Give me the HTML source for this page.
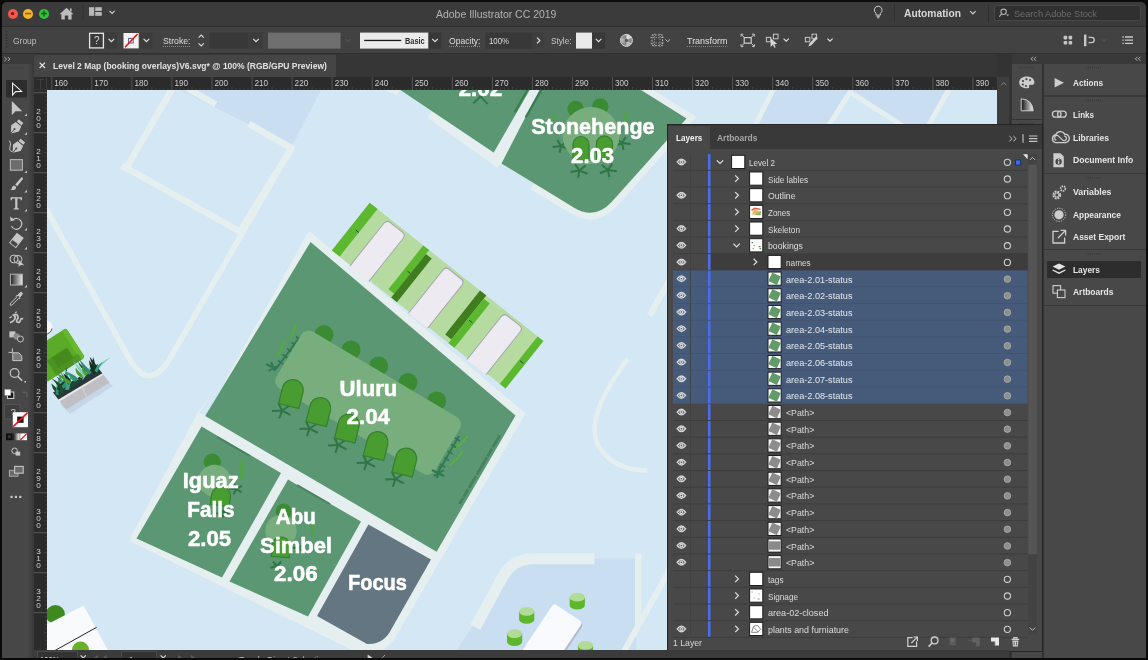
<!DOCTYPE html>
<html><head><meta charset="utf-8"><title>Adobe Illustrator CC 2019</title>
<style>
*{box-sizing:border-box;margin:0;padding:0}
html,body{width:1148px;height:660px;overflow:hidden;background:#101010;font-family:"Liberation Sans",sans-serif;}
#app{will-change:transform;position:absolute;left:0;top:0;width:1148px;height:660px;background:#0c0c0c;overflow:hidden}
.abs{position:absolute}
.t{position:absolute;white-space:nowrap;color:#cfcfcf;font-size:9.5px;line-height:12px}
.b{font-weight:bold}
svg{position:absolute;overflow:visible}
</style></head><body><div id="app">
<div class="abs" style="left:2px;top:2px;width:1144px;height:24px;background:#3b3b3b;border-radius:5px 5px 0 0"></div><div class="abs" style="left:2px;top:26px;width:1144px;height:1px;background:#2c2c2c"></div><div class="abs" style="left:7.5px;top:8.5px;width:10px;height:10px;border-radius:50%;background:#f2564d"></div><div class="abs" style="left:23.2px;top:8.5px;width:10px;height:10px;border-radius:50%;background:#f6b42c"></div><div class="abs" style="left:39px;top:8.5px;width:10px;height:10px;border-radius:50%;background:#35c03f"></div><svg style="left:0;top:0" width="1148" height="30">
<circle cx="12.5" cy="13.5" r="1.6" fill="#7c1109"/>
<rect x="25.2" y="12.8" width="6" height="1.5" fill="#90590a"/>
<path d="M41 13.5h6M44 10.5v6" stroke="#0b650f" stroke-width="1.5"/>
<path d="M59.5 14.2 L66.5 7.8 L73.5 14.2 L71.6 14.2 L71.6 19.6 L68.2 19.6 L68.2 15.6 L64.8 15.6 L64.8 19.6 L61.4 19.6 L61.4 14.2 Z" fill="#bdbdbd"/>
<rect x="70" y="8.4" width="1.6" height="3" fill="#bdbdbd"/>
<rect x="82.5" y="5" width="1" height="16" fill="#333"/>
<rect x="89" y="7.2" width="5.2" height="8.6" fill="#b8b8b8"/><rect x="95.2" y="7.2" width="6.6" height="3.8" fill="#b8b8b8"/><rect x="95.2" y="12" width="6.6" height="3.8" fill="#b8b8b8"/>
<path d="M109.5 10.8 l2.6 2.6 l2.6 -2.6" fill="none" stroke="#d0d0d0" stroke-width="1.2"/>
</svg><svg style="left:0;top:0" width="1148" height="30">
<path d="M878.2 6.2 a3.9 3.9 0 0 1 2.2 7.1 v1.8 h-4.4 v-1.8 a3.9 3.9 0 0 1 2.2 -7.1z M876.6 16.3h3.2 M877 17.8h2.4" fill="none" stroke="#c8c8c8" stroke-width="1"/>
<rect x="894" y="4" width="1" height="18" fill="#303030"/>
<path d="M970.2 11.2 l2.7 2.7 l2.7 -2.7" fill="none" stroke="#d0d0d0" stroke-width="1.2"/>
<rect x="988" y="4" width="1" height="18" fill="#303030"/>
<rect x="994.5" y="5.5" width="146" height="15" rx="2" fill="#303030" stroke="#474747" stroke-width="1"/>
<circle cx="1003.6" cy="11.8" r="2.7" fill="none" stroke="#b0b0b0" stroke-width="1.1"/><path d="M1001.8 13.8 l-2.6 2.8" stroke="#b0b0b0" stroke-width="1.2"/>
<path d="M1006.2 14.6 h3 l-1.5 1.7z" fill="#b0b0b0"/>
</svg><div class="abs" style="left:2px;top:27px;width:1144px;height:27px;background:#424242"></div><div class="abs" style="left:2px;top:53px;width:1144px;height:1px;background:#303030"></div><svg style="left:0;top:0" width="1148" height="60">
<g fill="#2e2e2e"><rect x="6" y="31" width="1.2" height="1.5"/><rect x="6" y="34" width="1.2" height="1.5"/><rect x="6" y="37" width="1.2" height="1.5"/><rect x="6" y="40" width="1.2" height="1.5"/><rect x="6" y="43" width="1.2" height="1.5"/><rect x="6" y="46" width="1.2" height="1.5"/></g>
<rect x="89.6" y="33.3" width="13.8" height="14.6" fill="#3a3a3a" stroke="#e6e6e6" stroke-width="1.3"/>
<rect x="105.5" y="32.6" width="12" height="16" fill="#3c3c3c"/>
<path d="M108.6 38.8 l2.8 2.8 l2.8 -2.8" fill="none" stroke="#e0e0e0" stroke-width="1.2"/>
<rect x="123.5" y="33" width="15.2" height="15.4" fill="#f4f4f4"/>
<rect x="128.6" y="38.4" width="4.6" height="4.6" fill="none" stroke="#5a5a8a" stroke-width="1"/>
<path d="M125 47.2 L137.6 34" stroke="#e8141c" stroke-width="1.6"/>
<rect x="140.5" y="32.6" width="12" height="16" fill="#3c3c3c"/>
<path d="M143.6 38.8 l2.8 2.8 l2.8 -2.8" fill="none" stroke="#e0e0e0" stroke-width="1.2"/>
<path d="M163 46.5h27.5" stroke="#9a9a9a" stroke-width="0.8" stroke-dasharray="1 1"/>
<path d="M198.6 37.6 l2.6 -2.6 l2.6 2.6 M198.6 43.4 l2.6 2.6 l2.6 -2.6" fill="none" stroke="#d8d8d8" stroke-width="1.1"/>
<rect x="209.5" y="32.6" width="39" height="16" fill="#383838"/>
<rect x="249.5" y="32.6" width="13" height="16" fill="#3c3c3c"/>
<path d="M253.2 38.8 l2.8 2.8 l2.8 -2.8" fill="none" stroke="#e0e0e0" stroke-width="1.2"/>
<rect x="268" y="32.6" width="72.5" height="16" fill="#6f6f6f"/>
<path d="M345.4 39.2 l2.4 2.4 l2.4 -2.4" fill="none" stroke="#555" stroke-width="1.1"/>
<rect x="360" y="32.6" width="68.5" height="16" fill="#ebebeb"/>
<rect x="364.2" y="39.8" width="37" height="1.3" fill="#1a1a1a"/>
<rect x="428.5" y="32.6" width="13" height="16" fill="#383838"/>
<path d="M432.2 38.8 l2.8 2.8 l2.8 -2.8" fill="none" stroke="#e0e0e0" stroke-width="1.2"/>
<path d="M449 46.5h31.5" stroke="#9a9a9a" stroke-width="0.8" stroke-dasharray="1 1"/>
<rect x="485.5" y="32.6" width="47" height="16" fill="#383838"/>
<rect x="532.5" y="32.6" width="12" height="16" fill="#3e3e3e"/>
<path d="M537 37.6 l2.9 2.9 l-2.9 2.9" fill="none" stroke="#e0e0e0" stroke-width="1.2"/>
<rect x="576" y="32.6" width="16" height="16" fill="#e9e9e9"/>
<rect x="592" y="32.6" width="13" height="16" fill="#383838"/>
<path d="M595.8 38.8 l2.8 2.8 l2.8 -2.8" fill="none" stroke="#e0e0e0" stroke-width="1.2"/>
<circle cx="626.4" cy="40.4" r="6" fill="#8c8c8c" stroke="#d4d4d4" stroke-width="1"/>
<path d="M626.4 40.4 L626.4 34.4 A6 6 0 0 1 631.6 37.4 Z" fill="#d8d8d8"/><path d="M626.4 40.4 L631.6 43.4 A6 6 0 0 1 626.4 46.4 Z" fill="#bdbdbd"/><path d="M626.4 40.4 L621.2 43.4 A6 6 0 0 1 621.2 37.4 Z" fill="#b0b0b0"/>
<circle cx="626.4" cy="40.4" r="1.6" fill="#555"/>
<rect x="652" y="35" width="10.6" height="10.6" fill="none" stroke="#c8c8c8" stroke-width="1" stroke-dasharray="1.6 1.4"/>
<path d="M650.5 37.6h13.6M650.5 43h13.6M654.6 33.6v13.6M660 33.6v13.6" stroke="#c8c8c8" stroke-width="0.7" stroke-dasharray="1.2 1.4"/>
<path d="M665.4 39.4 l2.3 2.3 l2.3 -2.3" fill="none" stroke="#bdbdbd" stroke-width="1"/>
<path d="M687 46.5h40.5" stroke="#9a9a9a" stroke-width="0.8" stroke-dasharray="1 1"/>
<rect x="744.2" y="37.6" width="7" height="5.6" fill="none" stroke="#d0d0d0" stroke-width="1.2"/>
<path d="M741.4 34.6 l2.4 2.4 M754 34.6 l-2.4 2.4 M741.4 46.2 l2.4 -2.4 M754 46.2 l-2.4 -2.4" stroke="#d0d0d0" stroke-width="1"/>
<path d="M741 36.6 v-2.4 h2.4 M752 34.2 h2.4 v2.4 M741 44.2 v2.4 h2.4 M752 46.6 h2.4 v-2.4" fill="none" stroke="#d0d0d0" stroke-width="0.9"/>
<rect x="766.4" y="37.4" width="4.4" height="4.4" fill="none" stroke="#c8c8c8" stroke-width="1"/>
<rect x="773.4" y="34.2" width="4.6" height="4.6" fill="none" stroke="#c8c8c8" stroke-width="1"/>
<path d="M770.6 38 l0 9 l2.3 -2.2 l1.5 3 l1.3 -0.6 l-1.5 -3 l3 -0.2z" fill="#d6d6d6"/>
<path d="M783.6 38.6 l2.6 2.6 l2.6 -2.6" fill="none" stroke="#e0e0e0" stroke-width="1.2"/>
<rect x="805.4" y="37.4" width="4.4" height="4.4" fill="none" stroke="#c8c8c8" stroke-width="1"/>
<rect x="812" y="34.2" width="4.6" height="4.6" fill="none" stroke="#c8c8c8" stroke-width="1"/>
<path d="M808.4 46.6 l1 -3.2 l6.4 -7 l2 1.8 l-6.4 7z" fill="#d0d0d0"/>
<path d="M827.4 38.6 l2.6 2.6 l2.6 -2.6" fill="none" stroke="#e0e0e0" stroke-width="1.2"/>
<g fill="#c4c4c4"><rect x="1063.6" y="35.8" width="3.6" height="3.6" rx="0.8"/><rect x="1068.6" y="35.8" width="3.6" height="3.6" rx="0.8"/><rect x="1063.6" y="41" width="3.6" height="3.6" rx="0.8"/><rect x="1068.6" y="41" width="3.6" height="3.6" rx="0.8"/></g>
<rect x="1084" y="34.6" width="2.4" height="11.6" fill="#c8c8c8"/>
<path d="M1088.6 37.4 h3 a2.6 2.6 0 0 1 0 5.2 h-3" fill="none" stroke="#c8c8c8" stroke-width="1.3"/>
<path d="M1101.6 38.8 l2.3 2.3 l2.3 -2.3" fill="none" stroke="#555" stroke-width="1"/>
<path d="M1122.4 37 h1.4 M1125 37 h8 M1122.4 40.2 h1.4 M1125 40.2 h8 M1122.4 43.4 h1.4 M1125 43.4 h8" stroke="#c8c8c8" stroke-width="1.3"/>
</svg><div class="abs" style="left:2px;top:54px;width:1144px;height:23px;background:#363636"></div><div class="abs" style="left:2px;top:54px;width:32px;height:10px;background:#3a3a3a"></div><div class="abs" style="left:34px;top:55px;width:302px;height:22px;background:#454545"></div><svg style="left:0;top:0" width="400" height="80">
<path d="M4.6 57.2 l2 2 l-2 2 M8 57.2 l2 2 l-2 2" fill="none" stroke="#c0c0c0" stroke-width="0.9"/>
<path d="M39.6 62.6 l5.4 5.4 M45 62.6 l-5.4 5.4" stroke="#e6e6e6" stroke-width="1.2"/>
</svg><div class="t" style="left:436.00px;top:7.53px;font-size:10.6px;color:#b4b4b4;transform:scaleX(0.9880);transform-origin:0 0;">Adobe Illustrator CC 2019</div><div class="t" style="left:904.00px;top:7.54px;font-size:10px;color:#d6d6d6;transform:scaleX(1.0262);transform-origin:0 0;font-weight:bold;">Automation</div><div class="t" style="left:1014.00px;top:7.67px;font-size:9.6px;color:#6c6c6c;transform:scaleX(0.9542);transform-origin:0 0;">Search Adobe Stock</div><div class="t" style="left:12.60px;top:34.60px;font-size:9.8px;color:#bdbdbd;transform:scaleX(0.8629);transform-origin:0 0;">Group</div><div class="t" style="left:94.00px;top:34.73px;font-size:10px;color:#dcdcdc;">?</div><div class="t" style="left:163.00px;top:34.60px;font-size:9.8px;color:#dedede;transform:scaleX(0.8858);transform-origin:0 0;">Stroke:</div><div class="t" style="left:405.00px;top:34.67px;font-size:9.6px;color:#2a2a2a;transform:scaleX(0.7652);transform-origin:0 0;font-weight:bold;">Basic</div><div class="t" style="left:449.00px;top:34.60px;font-size:9.8px;color:#dedede;transform:scaleX(0.8763);transform-origin:0 0;">Opacity:</div><div class="t" style="left:489.00px;top:34.67px;font-size:9.6px;color:#dedede;transform:scaleX(0.8146);transform-origin:0 0;">100%</div><div class="t" style="left:550.60px;top:34.60px;font-size:9.8px;color:#c8c8c8;transform:scaleX(0.8364);transform-origin:0 0;">Style:</div><div class="t" style="left:687.00px;top:34.60px;font-size:9.8px;color:#e0e0e0;transform:scaleX(0.9146);transform-origin:0 0;">Transform</div><div class="t" style="left:52.50px;top:60.07px;font-size:9.6px;color:#e2e2e2;transform:scaleX(0.8862);transform-origin:0 0;font-weight:bold;">Level 2 Map (booking overlays)V6.svg* @ 100% (RGB/GPU Preview)</div><div class="abs" style="left:34px;top:77px;width:963px;height:13px;background:#2b2b2b"></div><div class="abs" style="left:34px;top:77px;width:13px;height:573px;background:#2b2b2b"></div><svg style="left:0;top:0" width="1148" height="660" font-family="Liberation Sans, sans-serif"><path d="M36.5 79.5h8M40.5 79.5v9" stroke="#555" stroke-width="0.8" stroke-dasharray="1 1" fill="none"/><rect x="46" y="77" width="1" height="13" fill="#3c3c3c"/><rect x="34" y="89.5" width="13" height="0.8" fill="#3c3c3c"/><rect x="51.3" y="77" width="1" height="13" fill="#555"/><text x="54.3" y="86.4" font-size="8.5" fill="#cdcdcd" text-anchor="start" textLength="13.6" lengthAdjust="spacingAndGlyphs" >160</text><rect x="91.3" y="77" width="1" height="13" fill="#555"/><text x="94.35" y="86.4" font-size="8.5" fill="#cdcdcd" text-anchor="start" textLength="13.6" lengthAdjust="spacingAndGlyphs" >170</text><rect x="131.4" y="77" width="1" height="13" fill="#555"/><text x="134.39999999999998" y="86.4" font-size="8.5" fill="#cdcdcd" text-anchor="start" textLength="13.6" lengthAdjust="spacingAndGlyphs" >180</text><rect x="171.4" y="77" width="1" height="13" fill="#555"/><text x="174.45" y="86.4" font-size="8.5" fill="#cdcdcd" text-anchor="start" textLength="13.6" lengthAdjust="spacingAndGlyphs" >190</text><rect x="211.5" y="77" width="1" height="13" fill="#555"/><text x="214.5" y="86.4" font-size="8.5" fill="#cdcdcd" text-anchor="start" textLength="13.6" lengthAdjust="spacingAndGlyphs" >200</text><rect x="251.6" y="77" width="1" height="13" fill="#555"/><text x="254.55" y="86.4" font-size="8.5" fill="#cdcdcd" text-anchor="start" textLength="13.6" lengthAdjust="spacingAndGlyphs" >210</text><rect x="291.6" y="77" width="1" height="13" fill="#555"/><text x="294.59999999999997" y="86.4" font-size="8.5" fill="#cdcdcd" text-anchor="start" textLength="13.6" lengthAdjust="spacingAndGlyphs" >220</text><rect x="331.6" y="77" width="1" height="13" fill="#555"/><text x="334.65" y="86.4" font-size="8.5" fill="#cdcdcd" text-anchor="start" textLength="13.6" lengthAdjust="spacingAndGlyphs" >230</text><rect x="371.7" y="77" width="1" height="13" fill="#555"/><text x="374.7" y="86.4" font-size="8.5" fill="#cdcdcd" text-anchor="start" textLength="13.6" lengthAdjust="spacingAndGlyphs" >240</text><rect x="411.8" y="77" width="1" height="13" fill="#555"/><text x="414.75" y="86.4" font-size="8.5" fill="#cdcdcd" text-anchor="start" textLength="13.6" lengthAdjust="spacingAndGlyphs" >250</text><rect x="451.8" y="77" width="1" height="13" fill="#555"/><text x="454.8" y="86.4" font-size="8.5" fill="#cdcdcd" text-anchor="start" textLength="13.6" lengthAdjust="spacingAndGlyphs" >260</text><rect x="491.9" y="77" width="1" height="13" fill="#555"/><text x="494.85" y="86.4" font-size="8.5" fill="#cdcdcd" text-anchor="start" textLength="13.6" lengthAdjust="spacingAndGlyphs" >270</text><rect x="531.9" y="77" width="1" height="13" fill="#555"/><text x="534.9" y="86.4" font-size="8.5" fill="#cdcdcd" text-anchor="start" textLength="13.6" lengthAdjust="spacingAndGlyphs" >280</text><rect x="571.9" y="77" width="1" height="13" fill="#555"/><text x="574.9499999999999" y="86.4" font-size="8.5" fill="#cdcdcd" text-anchor="start" textLength="13.6" lengthAdjust="spacingAndGlyphs" >290</text><rect x="612.0" y="77" width="1" height="13" fill="#555"/><text x="614.9999999999999" y="86.4" font-size="8.5" fill="#cdcdcd" text-anchor="start" textLength="13.6" lengthAdjust="spacingAndGlyphs" >300</text><rect x="652.0" y="77" width="1" height="13" fill="#555"/><text x="655.05" y="86.4" font-size="8.5" fill="#cdcdcd" text-anchor="start" textLength="13.6" lengthAdjust="spacingAndGlyphs" >310</text><rect x="692.1" y="77" width="1" height="13" fill="#555"/><text x="695.0999999999999" y="86.4" font-size="8.5" fill="#cdcdcd" text-anchor="start" textLength="13.6" lengthAdjust="spacingAndGlyphs" >320</text><rect x="732.1" y="77" width="1" height="13" fill="#555"/><text x="735.15" y="86.4" font-size="8.5" fill="#cdcdcd" text-anchor="start" textLength="13.6" lengthAdjust="spacingAndGlyphs" >330</text><rect x="772.2" y="77" width="1" height="13" fill="#555"/><text x="775.1999999999999" y="86.4" font-size="8.5" fill="#cdcdcd" text-anchor="start" textLength="13.6" lengthAdjust="spacingAndGlyphs" >340</text><rect x="812.2" y="77" width="1" height="13" fill="#555"/><text x="815.2499999999999" y="86.4" font-size="8.5" fill="#cdcdcd" text-anchor="start" textLength="13.6" lengthAdjust="spacingAndGlyphs" >350</text><rect x="852.3" y="77" width="1" height="13" fill="#555"/><text x="855.3" y="86.4" font-size="8.5" fill="#cdcdcd" text-anchor="start" textLength="13.6" lengthAdjust="spacingAndGlyphs" >360</text><rect x="892.3" y="77" width="1" height="13" fill="#555"/><text x="895.3499999999999" y="86.4" font-size="8.5" fill="#cdcdcd" text-anchor="start" textLength="13.6" lengthAdjust="spacingAndGlyphs" >370</text><rect x="932.4" y="77" width="1" height="13" fill="#555"/><text x="935.4" y="86.4" font-size="8.5" fill="#cdcdcd" text-anchor="start" textLength="13.6" lengthAdjust="spacingAndGlyphs" >380</text><rect x="972.4" y="77" width="1" height="13" fill="#555"/><text x="975.4499999999999" y="86.4" font-size="8.5" fill="#cdcdcd" text-anchor="start" textLength="13.6" lengthAdjust="spacingAndGlyphs" >390</text><path d="M47.8 88.4v1.6M55.8 88.4v1.6M59.8 88.4v1.6M63.8 88.4v1.6M67.8 88.4v1.6M71.8 87v3M75.8 88.4v1.6M79.8 88.4v1.6M83.8 88.4v1.6M87.8 88.4v1.6M95.9 88.4v1.6M99.9 88.4v1.6M103.9 88.4v1.6M107.9 88.4v1.6M111.9 87v3M115.9 88.4v1.6M119.9 88.4v1.6M123.9 88.4v1.6M127.9 88.4v1.6M135.9 88.4v1.6M139.9 88.4v1.6M143.9 88.4v1.6M147.9 88.4v1.6M151.9 87v3M155.9 88.4v1.6M159.9 88.4v1.6M163.9 88.4v1.6M167.9 88.4v1.6M176.0 88.4v1.6M180.0 88.4v1.6M184.0 88.4v1.6M188.0 88.4v1.6M192.0 87v3M196.0 88.4v1.6M200.0 88.4v1.6M204.0 88.4v1.6M208.0 88.4v1.6M216.0 88.4v1.6M220.0 88.4v1.6M224.0 88.4v1.6M228.0 88.4v1.6M232.0 87v3M236.0 88.4v1.6M240.0 88.4v1.6M244.0 88.4v1.6M248.0 88.4v1.6M256.1 88.4v1.6M260.1 88.4v1.6M264.1 88.4v1.6M268.1 88.4v1.6M272.1 87v3M276.1 88.4v1.6M280.1 88.4v1.6M284.1 88.4v1.6M288.1 88.4v1.6M296.1 88.4v1.6M300.1 88.4v1.6M304.1 88.4v1.6M308.1 88.4v1.6M312.1 87v3M316.1 88.4v1.6M320.1 88.4v1.6M324.1 88.4v1.6M328.1 88.4v1.6M336.2 88.4v1.6M340.2 88.4v1.6M344.2 88.4v1.6M348.2 88.4v1.6M352.2 87v3M356.2 88.4v1.6M360.2 88.4v1.6M364.2 88.4v1.6M368.2 88.4v1.6M376.2 88.4v1.6M380.2 88.4v1.6M384.2 88.4v1.6M388.2 88.4v1.6M392.2 87v3M396.2 88.4v1.6M400.2 88.4v1.6M404.2 88.4v1.6M408.2 88.4v1.6M416.3 88.4v1.6M420.3 88.4v1.6M424.3 88.4v1.6M428.3 88.4v1.6M432.3 87v3M436.3 88.4v1.6M440.3 88.4v1.6M444.3 88.4v1.6M448.3 88.4v1.6M456.3 88.4v1.6M460.3 88.4v1.6M464.3 88.4v1.6M468.3 88.4v1.6M472.3 87v3M476.3 88.4v1.6M480.3 88.4v1.6M484.3 88.4v1.6M488.3 88.4v1.6M496.4 88.4v1.6M500.4 88.4v1.6M504.4 88.4v1.6M508.4 88.4v1.6M512.4 87v3M516.4 88.4v1.6M520.4 88.4v1.6M524.4 88.4v1.6M528.4 88.4v1.6M536.4 88.4v1.6M540.4 88.4v1.6M544.4 88.4v1.6M548.4 88.4v1.6M552.4 87v3M556.4 88.4v1.6M560.4 88.4v1.6M564.4 88.4v1.6M568.4 88.4v1.6M576.5 88.4v1.6M580.5 88.4v1.6M584.5 88.4v1.6M588.5 88.4v1.6M592.5 87v3M596.5 88.4v1.6M600.5 88.4v1.6M604.5 88.4v1.6M608.5 88.4v1.6M616.5 88.4v1.6M620.5 88.4v1.6M624.5 88.4v1.6M628.5 88.4v1.6M632.5 87v3M636.5 88.4v1.6M640.5 88.4v1.6M644.5 88.4v1.6M648.5 88.4v1.6M656.6 88.4v1.6M660.6 88.4v1.6M664.6 88.4v1.6M668.6 88.4v1.6M672.6 87v3M676.6 88.4v1.6M680.6 88.4v1.6M684.6 88.4v1.6M688.6 88.4v1.6M696.6 88.4v1.6M700.6 88.4v1.6M704.6 88.4v1.6M708.6 88.4v1.6M712.6 87v3M716.6 88.4v1.6M720.6 88.4v1.6M724.6 88.4v1.6M728.6 88.4v1.6M736.7 88.4v1.6M740.7 88.4v1.6M744.7 88.4v1.6M748.7 88.4v1.6M752.7 87v3M756.7 88.4v1.6M760.7 88.4v1.6M764.7 88.4v1.6M768.7 88.4v1.6M776.7 88.4v1.6M780.7 88.4v1.6M784.7 88.4v1.6M788.7 88.4v1.6M792.7 87v3M796.7 88.4v1.6M800.7 88.4v1.6M804.7 88.4v1.6M808.7 88.4v1.6M816.8 88.4v1.6M820.8 88.4v1.6M824.8 88.4v1.6M828.8 88.4v1.6M832.8 87v3M836.8 88.4v1.6M840.8 88.4v1.6M844.8 88.4v1.6M848.8 88.4v1.6M856.8 88.4v1.6M860.8 88.4v1.6M864.8 88.4v1.6M868.8 88.4v1.6M872.8 87v3M876.8 88.4v1.6M880.8 88.4v1.6M884.8 88.4v1.6M888.8 88.4v1.6M896.9 88.4v1.6M900.9 88.4v1.6M904.9 88.4v1.6M908.9 88.4v1.6M912.9 87v3M916.9 88.4v1.6M920.9 88.4v1.6M924.9 88.4v1.6M928.9 88.4v1.6M936.9 88.4v1.6M940.9 88.4v1.6M944.9 88.4v1.6M948.9 88.4v1.6M952.9 87v3M956.9 88.4v1.6M960.9 88.4v1.6M964.9 88.4v1.6M968.9 88.4v1.6M977.0 88.4v1.6M981.0 88.4v1.6M985.0 88.4v1.6M989.0 88.4v1.6M993.0 87v3" stroke="#4a4a4a" stroke-width="0.8"/><rect x="34" y="92.2" width="13" height="1" fill="#5a5a5a"/><text x="38.6" y="113.9" font-size="7.6" fill="#d2d2d2" text-anchor="middle" transform="translate(38.6 113.9) scale(1.08 0.9) translate(-38.6 -113.9)">2</text><text x="38.6" y="121.0" font-size="7.6" fill="#d2d2d2" text-anchor="middle" transform="translate(38.6 121.0) scale(1.08 0.9) translate(-38.6 -121.0)">0</text><text x="38.6" y="128.1" font-size="7.6" fill="#d2d2d2" text-anchor="middle" transform="translate(38.6 128.1) scale(1.08 0.9) translate(-38.6 -128.1)">0</text><rect x="34" y="132.2" width="13" height="1" fill="#5a5a5a"/><text x="38.6" y="153.9" font-size="7.6" fill="#d2d2d2" text-anchor="middle" transform="translate(38.6 153.9) scale(1.08 0.9) translate(-38.6 -153.9)">2</text><text x="38.6" y="161.0" font-size="7.6" fill="#d2d2d2" text-anchor="middle" transform="translate(38.6 161.0) scale(1.08 0.9) translate(-38.6 -161.0)">1</text><text x="38.6" y="168.1" font-size="7.6" fill="#d2d2d2" text-anchor="middle" transform="translate(38.6 168.1) scale(1.08 0.9) translate(-38.6 -168.1)">0</text><rect x="34" y="172.2" width="13" height="1" fill="#5a5a5a"/><text x="38.6" y="193.9" font-size="7.6" fill="#d2d2d2" text-anchor="middle" transform="translate(38.6 193.9) scale(1.08 0.9) translate(-38.6 -193.9)">2</text><text x="38.6" y="201.0" font-size="7.6" fill="#d2d2d2" text-anchor="middle" transform="translate(38.6 201.0) scale(1.08 0.9) translate(-38.6 -201.0)">2</text><text x="38.6" y="208.1" font-size="7.6" fill="#d2d2d2" text-anchor="middle" transform="translate(38.6 208.1) scale(1.08 0.9) translate(-38.6 -208.1)">0</text><rect x="34" y="212.2" width="13" height="1" fill="#5a5a5a"/><text x="38.6" y="233.9" font-size="7.6" fill="#d2d2d2" text-anchor="middle" transform="translate(38.6 233.9) scale(1.08 0.9) translate(-38.6 -233.9)">2</text><text x="38.6" y="241.0" font-size="7.6" fill="#d2d2d2" text-anchor="middle" transform="translate(38.6 241.0) scale(1.08 0.9) translate(-38.6 -241.0)">3</text><text x="38.6" y="248.1" font-size="7.6" fill="#d2d2d2" text-anchor="middle" transform="translate(38.6 248.1) scale(1.08 0.9) translate(-38.6 -248.1)">0</text><rect x="34" y="252.2" width="13" height="1" fill="#5a5a5a"/><text x="38.6" y="273.9" font-size="7.6" fill="#d2d2d2" text-anchor="middle" transform="translate(38.6 273.9) scale(1.08 0.9) translate(-38.6 -273.9)">2</text><text x="38.6" y="281.0" font-size="7.6" fill="#d2d2d2" text-anchor="middle" transform="translate(38.6 281.0) scale(1.08 0.9) translate(-38.6 -281.0)">4</text><text x="38.6" y="288.1" font-size="7.6" fill="#d2d2d2" text-anchor="middle" transform="translate(38.6 288.1) scale(1.08 0.9) translate(-38.6 -288.1)">0</text><rect x="34" y="292.2" width="13" height="1" fill="#5a5a5a"/><text x="38.6" y="313.9" font-size="7.6" fill="#d2d2d2" text-anchor="middle" transform="translate(38.6 313.9) scale(1.08 0.9) translate(-38.6 -313.9)">2</text><text x="38.6" y="321.0" font-size="7.6" fill="#d2d2d2" text-anchor="middle" transform="translate(38.6 321.0) scale(1.08 0.9) translate(-38.6 -321.0)">5</text><text x="38.6" y="328.1" font-size="7.6" fill="#d2d2d2" text-anchor="middle" transform="translate(38.6 328.1) scale(1.08 0.9) translate(-38.6 -328.1)">0</text><rect x="34" y="332.2" width="13" height="1" fill="#5a5a5a"/><text x="38.6" y="353.9" font-size="7.6" fill="#d2d2d2" text-anchor="middle" transform="translate(38.6 353.9) scale(1.08 0.9) translate(-38.6 -353.9)">2</text><text x="38.6" y="361.0" font-size="7.6" fill="#d2d2d2" text-anchor="middle" transform="translate(38.6 361.0) scale(1.08 0.9) translate(-38.6 -361.0)">6</text><text x="38.6" y="368.1" font-size="7.6" fill="#d2d2d2" text-anchor="middle" transform="translate(38.6 368.1) scale(1.08 0.9) translate(-38.6 -368.1)">0</text><rect x="34" y="372.2" width="13" height="1" fill="#5a5a5a"/><text x="38.6" y="393.9" font-size="7.6" fill="#d2d2d2" text-anchor="middle" transform="translate(38.6 393.9) scale(1.08 0.9) translate(-38.6 -393.9)">2</text><text x="38.6" y="401.0" font-size="7.6" fill="#d2d2d2" text-anchor="middle" transform="translate(38.6 401.0) scale(1.08 0.9) translate(-38.6 -401.0)">7</text><text x="38.6" y="408.1" font-size="7.6" fill="#d2d2d2" text-anchor="middle" transform="translate(38.6 408.1) scale(1.08 0.9) translate(-38.6 -408.1)">0</text><rect x="34" y="412.2" width="13" height="1" fill="#5a5a5a"/><text x="38.6" y="433.9" font-size="7.6" fill="#d2d2d2" text-anchor="middle" transform="translate(38.6 433.9) scale(1.08 0.9) translate(-38.6 -433.9)">2</text><text x="38.6" y="441.0" font-size="7.6" fill="#d2d2d2" text-anchor="middle" transform="translate(38.6 441.0) scale(1.08 0.9) translate(-38.6 -441.0)">8</text><text x="38.6" y="448.1" font-size="7.6" fill="#d2d2d2" text-anchor="middle" transform="translate(38.6 448.1) scale(1.08 0.9) translate(-38.6 -448.1)">0</text><rect x="34" y="452.2" width="13" height="1" fill="#5a5a5a"/><text x="38.6" y="473.9" font-size="7.6" fill="#d2d2d2" text-anchor="middle" transform="translate(38.6 473.9) scale(1.08 0.9) translate(-38.6 -473.9)">2</text><text x="38.6" y="481.0" font-size="7.6" fill="#d2d2d2" text-anchor="middle" transform="translate(38.6 481.0) scale(1.08 0.9) translate(-38.6 -481.0)">9</text><text x="38.6" y="488.1" font-size="7.6" fill="#d2d2d2" text-anchor="middle" transform="translate(38.6 488.1) scale(1.08 0.9) translate(-38.6 -488.1)">0</text><rect x="34" y="492.2" width="13" height="1" fill="#5a5a5a"/><text x="38.6" y="513.9" font-size="7.6" fill="#d2d2d2" text-anchor="middle" transform="translate(38.6 513.9) scale(1.08 0.9) translate(-38.6 -513.9)">3</text><text x="38.6" y="521.0" font-size="7.6" fill="#d2d2d2" text-anchor="middle" transform="translate(38.6 521.0) scale(1.08 0.9) translate(-38.6 -521.0)">0</text><text x="38.6" y="528.1" font-size="7.6" fill="#d2d2d2" text-anchor="middle" transform="translate(38.6 528.1) scale(1.08 0.9) translate(-38.6 -528.1)">0</text><rect x="34" y="532.2" width="13" height="1" fill="#5a5a5a"/><text x="38.6" y="553.9" font-size="7.6" fill="#d2d2d2" text-anchor="middle" transform="translate(38.6 553.9) scale(1.08 0.9) translate(-38.6 -553.9)">3</text><text x="38.6" y="561.0" font-size="7.6" fill="#d2d2d2" text-anchor="middle" transform="translate(38.6 561.0) scale(1.08 0.9) translate(-38.6 -561.0)">1</text><text x="38.6" y="568.1" font-size="7.6" fill="#d2d2d2" text-anchor="middle" transform="translate(38.6 568.1) scale(1.08 0.9) translate(-38.6 -568.1)">0</text><rect x="34" y="572.2" width="13" height="1" fill="#5a5a5a"/><text x="38.6" y="593.9" font-size="7.6" fill="#d2d2d2" text-anchor="middle" transform="translate(38.6 593.9) scale(1.08 0.9) translate(-38.6 -593.9)">3</text><text x="38.6" y="601.0" font-size="7.6" fill="#d2d2d2" text-anchor="middle" transform="translate(38.6 601.0) scale(1.08 0.9) translate(-38.6 -601.0)">2</text><text x="38.6" y="608.1" font-size="7.6" fill="#d2d2d2" text-anchor="middle" transform="translate(38.6 608.1) scale(1.08 0.9) translate(-38.6 -608.1)">0</text><rect x="34" y="612.2" width="13" height="1" fill="#5a5a5a"/><path d="M45.4 96.7h1.6M45.4 100.7h1.6M45.4 104.7h1.6M45.4 108.7h1.6M44 112.7h3M45.4 116.7h1.6M45.4 120.7h1.6M45.4 124.7h1.6M45.4 128.7h1.6M45.4 136.7h1.6M45.4 140.7h1.6M45.4 144.7h1.6M45.4 148.7h1.6M44 152.7h3M45.4 156.7h1.6M45.4 160.7h1.6M45.4 164.7h1.6M45.4 168.7h1.6M45.4 176.7h1.6M45.4 180.7h1.6M45.4 184.7h1.6M45.4 188.7h1.6M44 192.7h3M45.4 196.7h1.6M45.4 200.7h1.6M45.4 204.7h1.6M45.4 208.7h1.6M45.4 216.7h1.6M45.4 220.7h1.6M45.4 224.7h1.6M45.4 228.7h1.6M44 232.7h3M45.4 236.7h1.6M45.4 240.7h1.6M45.4 244.7h1.6M45.4 248.7h1.6M45.4 256.7h1.6M45.4 260.7h1.6M45.4 264.7h1.6M45.4 268.7h1.6M44 272.7h3M45.4 276.7h1.6M45.4 280.7h1.6M45.4 284.7h1.6M45.4 288.7h1.6M45.4 296.7h1.6M45.4 300.7h1.6M45.4 304.7h1.6M45.4 308.7h1.6M44 312.7h3M45.4 316.7h1.6M45.4 320.7h1.6M45.4 324.7h1.6M45.4 328.7h1.6M45.4 336.7h1.6M45.4 340.7h1.6M45.4 344.7h1.6M45.4 348.7h1.6M44 352.7h3M45.4 356.7h1.6M45.4 360.7h1.6M45.4 364.7h1.6M45.4 368.7h1.6M45.4 376.7h1.6M45.4 380.7h1.6M45.4 384.7h1.6M45.4 388.7h1.6M44 392.7h3M45.4 396.7h1.6M45.4 400.7h1.6M45.4 404.7h1.6M45.4 408.7h1.6M45.4 416.7h1.6M45.4 420.7h1.6M45.4 424.7h1.6M45.4 428.7h1.6M44 432.7h3M45.4 436.7h1.6M45.4 440.7h1.6M45.4 444.7h1.6M45.4 448.7h1.6M45.4 456.7h1.6M45.4 460.7h1.6M45.4 464.7h1.6M45.4 468.7h1.6M44 472.7h3M45.4 476.7h1.6M45.4 480.7h1.6M45.4 484.7h1.6M45.4 488.7h1.6M45.4 496.7h1.6M45.4 500.7h1.6M45.4 504.7h1.6M45.4 508.7h1.6M44 512.7h3M45.4 516.7h1.6M45.4 520.7h1.6M45.4 524.7h1.6M45.4 528.7h1.6M45.4 536.7h1.6M45.4 540.7h1.6M45.4 544.7h1.6M45.4 548.7h1.6M44 552.7h3M45.4 556.7h1.6M45.4 560.7h1.6M45.4 564.7h1.6M45.4 568.7h1.6M45.4 576.7h1.6M45.4 580.7h1.6M45.4 584.7h1.6M45.4 588.7h1.6M44 592.7h3M45.4 596.7h1.6M45.4 600.7h1.6M45.4 604.7h1.6M45.4 608.7h1.6M45.4 616.7h1.6M45.4 620.7h1.6M45.4 624.7h1.6M45.4 628.7h1.6M44 632.7h3M45.4 636.7h1.6M45.4 640.7h1.6M45.4 644.7h1.6M45.4 648.7h1.6" stroke="#4a4a4a" stroke-width="0.8"/></svg><div class="abs" style="left:997px;top:77px;width:14px;height:573px;background:#363636"></div><svg style="left:0;top:0" width="1148" height="100"><path d="M1000.6 85 l3 -3 l3 3" fill="none" stroke="#6a6a6a" stroke-width="1"/></svg><svg style="left:47px;top:90px;will-change:transform" width="950" height="560" viewBox="47 90 950 560" font-family="Liberation Sans, sans-serif"><defs><clipPath id="cv"><rect x="47" y="90" width="950" height="560"/></clipPath></defs><g clip-path="url(#cv)"><rect x="47" y="90" width="950" height="560" fill="#d4e7f5"/><polygon points="180.0,90.0 321.0,90.0 292.0,146.0" fill="#c9dff1" /><polygon points="773.0,90.0 850.0,90.0 829.0,126.0 756.0,126.0" fill="#c9dff1" /><polygon points="850.0,90.0 949.0,90.0 928.0,126.0 906.0,126.0" fill="#c9dff1" /><path d="M455 652 L470 630 L504 574.5 Q513 558.5 531 558.5 L636 558.5 L636 652 Z" fill="#c9dff1"/><polyline points="215.8,104.5 176.2,81.7 126.4,168.0 240.0,231.5 291.5,148.2 249.0,123.7" fill="none" stroke="#e6eff0" stroke-width="6.5" stroke-linejoin="miter" stroke-linecap="butt"/><polyline points="122.0,165.5 130.0,170.0" fill="none" stroke="#e6eff0" stroke-width="6.5" stroke-linejoin="miter" stroke-linecap="butt"/><path d="M39 196 L128.3 356.7 Q149 394.9 170.9 356.7 L291.5 148.2" fill="none" stroke="#e6eff0" stroke-width="5.5"/><polyline points="776.0,84.0 753.0,130.0" fill="none" stroke="#e6eff0" stroke-width="5" stroke-linejoin="miter" stroke-linecap="butt"/><polyline points="826.0,130.0 850.0,92.0 909.0,130.0" fill="none" stroke="#e6eff0" stroke-width="5" stroke-linejoin="miter" stroke-linecap="butt"/><polyline points="952.0,84.0 926.0,130.0" fill="none" stroke="#e6eff0" stroke-width="5" stroke-linejoin="miter" stroke-linecap="butt"/><polyline points="649.6,315.4 674.0,272.0" fill="none" stroke="#e6eff0" stroke-width="6" stroke-linejoin="miter" stroke-linecap="butt"/><path d="M627.5 358.4 C613 380 596 404 594.6 427 C593.5 452 616 470.5 647.6 470.5" fill="none" stroke="#e6eff0" stroke-width="4.6"/><path d="M475.3 627.2 L502.5 577.2 Q512.5 558.8 533 558.8 L594.4 558.8" fill="none" stroke="#e6eff0" stroke-width="11"/><polyline points="638.2,553.4 638.2,626.0" fill="none" stroke="#e6eff0" stroke-width="6.4" stroke-linejoin="miter" stroke-linecap="butt"/><polyline points="669.5,570.0 622.0,655.0" fill="none" stroke="#e6eff0" stroke-width="6" stroke-linejoin="miter" stroke-linecap="butt"/><polygon points="431.7,111.2 500.5,157.5 497.0,167.5 428.0,118.0" fill="#e6eff0" /><polygon points="388.0,86.0 400.0,90.0 397.0,95.0 386.0,91.0" fill="#e6eff0" /><polygon points="529.7,88.0 539.5,88.0 501.5,163.4 497.0,168.0 491.0,158.0" fill="#e6eff0" /><path d="M630 83 L686.5 118.5 L611.6 202.1 Q594.8 220.2 573.6 207.5 L534 183.7" fill="none" stroke="#e6eff0" stroke-width="13" stroke-linejoin="miter"/><polygon points="400.4,90.0 493.7,152.4 529.7,90.0" fill="#5b9772" /><path d="M539.5 90 L641 90 L686.5 118.5 L611.6 202.1 Q594.8 220.2 573.6 207.5 L501.5 163.4 Z" fill="#5b9772"/><circle cx="575.6" cy="109" r="8.2" fill="#3b8b34"/><circle cx="600.3" cy="106.5" r="8.2" fill="#3b8b34"/><path d="M561.0 146.0L559.5 152.7M561.0 146.0L552.6 146.9M561.0 146.0L557.3 139.9M561.0 146.0L567.1 141.3M561.0 146.0L568.5 149.2" stroke="#2f7545" stroke-width="2" fill="none"/><path d="M622.0 143.0L623.5 149.7M622.0 143.0L614.5 146.2M622.0 143.0L615.9 138.3M622.0 143.0L625.7 136.9M622.0 143.0L630.4 143.9" stroke="#2f7545" stroke-width="2" fill="none"/><polyline points="553.0,123.0 555.0,113.0" fill="none" stroke="#4ca838" stroke-width="2" stroke-linejoin="miter" stroke-linecap="butt"/><polyline points="624.6,122.0 627.0,112.0" fill="none" stroke="#4ca838" stroke-width="2" stroke-linejoin="miter" stroke-linecap="butt"/><circle cx="591" cy="135.5" r="28.4" fill="#78ae7d"/><path d="M579.4 170.6L578.1 177.7M579.4 170.6L570.5 171.9M579.4 170.6L575.2 164.2M579.4 170.6L585.7 165.4M579.4 170.6L587.5 173.8" stroke="#2f7545" stroke-width="2" fill="none"/><path d="M608.0 170.0L609.3 177.1M608.0 170.0L599.9 173.2M608.0 170.0L601.7 164.8M608.0 170.0L612.2 163.6M608.0 170.0L616.9 171.3" stroke="#2f7545" stroke-width="2" fill="none"/><g transform="translate(581 148.5) rotate(0)"><path d="M-8.0 12.0 L-8.0 -4.0 A8.0 8.0 0 0 1 8.0 -4.0 L8.0 12.0 Z" fill="#489c30" stroke="#357f33" stroke-width="1.2"/></g><g transform="translate(604.4 147.8) rotate(0)"><path d="M-8.0 12.0 L-8.0 -4.0 A8.0 8.0 0 0 1 8.0 -4.0 L8.0 12.0 Z" fill="#489c30" stroke="#357f33" stroke-width="1.2"/></g><polyline points="473.4,103.4 482.0,95.0" fill="none" stroke="#2f7545" stroke-width="1.8" stroke-linejoin="miter" stroke-linecap="butt"/><polyline points="487.6,104.0 479.6,95.6" fill="none" stroke="#2f7545" stroke-width="1.8" stroke-linejoin="miter" stroke-linecap="butt"/><polyline points="514.7,112.2 527.5,90.0" fill="none" stroke="#3a7d4e" stroke-width="2.2" stroke-linejoin="miter" stroke-linecap="butt"/><polyline points="525.7,117.4 541.4,90.0" fill="none" stroke="#3a7d4e" stroke-width="2.2" stroke-linejoin="miter" stroke-linecap="butt"/><polygon points="309.0,231.0 525.5,413.5 394.0,640.0 380.0,654.0 360.0,654.0 129.5,541.0 133.0,533.0 197.0,414.0 221.8,380.0 223.0,384.0" fill="#e6eff0" /><polygon points="222.0,379.0 226.0,381.5 206.5,415.5 199.0,413.0" fill="#d4e7f5" /><polygon points="310.6,242.0 515.5,415.6 436.6,551.8 205.2,416.0" fill="#5b9772" /><polygon points="201.6,426.6 281.0,473.0 222.0,577.5 136.5,538.5" fill="#5b9772" /><polygon points="288.0,479.6 361.0,521.5 308.0,616.5 229.5,581.5" fill="#5b9772" /><path d="M368.4 524.5 L431 559.5 L392 628 Q384 645 367 644 L317 616 Z" fill="#647682"/><circle cx="324" cy="334.5" r="9.5" fill="#3b8b34"/><circle cx="351" cy="350" r="9.5" fill="#3b8b34"/><circle cx="378.7" cy="366" r="9.5" fill="#3b8b34"/><circle cx="408" cy="382.5" r="9.5" fill="#3b8b34"/><circle cx="436.7" cy="401" r="9.5" fill="#3b8b34"/><path d="M296 324 q-1.5 8 -6 15 M283.8 340.5 q-1 8 -6.5 16" stroke="#4fae3c" stroke-width="2" fill="none" stroke-linecap="round"/><path d="M299 338 L276 369 M296 336.5 l5 3.5 M291.5 342.5 l5 3.5 M287 348.5 l5 3.5 M282.5 354.5 l5 3.5 M278 360.5 l5 3.5" stroke="#2f7a50" stroke-width="1.8" fill="none"/><path d="M268.5 371 l9 -5 M271 362 l4 9 M266 364 l10 5" stroke="#2f7a50" stroke-width="2" fill="none"/><g transform="translate(305.6 327.4) rotate(30.6)"><rect x="0" y="0" width="184.3" height="66" rx="9" fill="#78ae7d"/></g><path d="M454 449 l9 -7 l4 -5.5 M450 465 l8 -7 l4 -6" stroke="#5bb040" stroke-width="1.8" fill="none" stroke-linecap="round"/><path d="M459 436 L437 474 M455 438 l5 3 M451 444.5 l5 3 M447.5 451 l5 3 M444 457.5 l5 3 M440 464 l5 3" stroke="#2f7a50" stroke-width="1.8" fill="none"/><path d="M432 470 l12 6 M440 466 l-3 12 M444 470 l-10 6" stroke="#2f7a50" stroke-width="2" fill="none"/><path d="M282.0 410.5L279.4 418.2M282.0 410.5L272.0 410.9M282.0 410.5L278.4 403.0M282.0 410.5L289.8 405.5M282.0 410.5L290.4 414.9" stroke="#2f7545" stroke-width="2" fill="none"/><g transform="translate(292 393) rotate(14)"><path d="M-10.5 13.5 L-10.5 -3.0 A10.5 10.5 0 0 1 10.5 -3.0 L10.5 13.5 Z" fill="#489c30" stroke="#357f33" stroke-width="1.2"/></g><path d="M309.5 428.5L306.9 436.2M309.5 428.5L299.5 428.9M309.5 428.5L305.9 421.0M309.5 428.5L317.3 423.5M309.5 428.5L317.9 432.9" stroke="#2f7545" stroke-width="2" fill="none"/><g transform="translate(319.5 411) rotate(14)"><path d="M-10.5 13.5 L-10.5 -3.0 A10.5 10.5 0 0 1 10.5 -3.0 L10.5 13.5 Z" fill="#489c30" stroke="#357f33" stroke-width="1.2"/></g><path d="M338.0 445.0L335.4 452.7M338.0 445.0L328.0 445.4M338.0 445.0L334.4 437.5M338.0 445.0L345.8 440.0M338.0 445.0L346.4 449.4" stroke="#2f7545" stroke-width="2" fill="none"/><g transform="translate(348 427.5) rotate(14)"><path d="M-10.5 13.5 L-10.5 -3.0 A10.5 10.5 0 0 1 10.5 -3.0 L10.5 13.5 Z" fill="#489c30" stroke="#357f33" stroke-width="1.2"/></g><path d="M366.8 462.5L364.2 470.2M366.8 462.5L356.8 462.9M366.8 462.5L363.2 455.0M366.8 462.5L374.6 457.5M366.8 462.5L375.2 466.9" stroke="#2f7545" stroke-width="2" fill="none"/><g transform="translate(376.8 445) rotate(14)"><path d="M-10.5 13.5 L-10.5 -3.0 A10.5 10.5 0 0 1 10.5 -3.0 L10.5 13.5 Z" fill="#489c30" stroke="#357f33" stroke-width="1.2"/></g><path d="M395.4 479.0L392.8 486.7M395.4 479.0L385.4 479.4M395.4 479.0L391.8 471.5M395.4 479.0L403.2 474.0M395.4 479.0L403.8 483.4" stroke="#2f7545" stroke-width="2" fill="none"/><g transform="translate(405.4 461.5) rotate(14)"><path d="M-10.5 13.5 L-10.5 -3.0 A10.5 10.5 0 0 1 10.5 -3.0 L10.5 13.5 Z" fill="#489c30" stroke="#357f33" stroke-width="1.2"/></g><polyline points="499.8,435.3 459.4,504.2" fill="none" stroke="#43805c" stroke-width="2.6" stroke-dasharray="14 1.5 9 1 20 1.5"/><polyline points="477.0,366.0 486.0,373.0" fill="none" stroke="#4a8262" stroke-width="2" stroke-linejoin="miter" stroke-linecap="butt"/><circle cx="212.3" cy="462" r="8.6" fill="#3b8b34"/><path d="M236.0 489.0L233.6 494.3M236.0 489.0L229.0 488.8M236.0 489.0L234.1 483.6M236.0 489.0L241.8 485.9M236.0 489.0L241.5 492.4" stroke="#2f7545" stroke-width="2" fill="none"/><path d="M223.0 512.0L223.0 517.6M223.0 512.0L216.3 513.7M223.0 512.0L218.9 507.5M223.0 512.0L227.1 507.5M223.0 512.0L229.7 513.7" stroke="#2f7545" stroke-width="2" fill="none"/><circle cx="214.5" cy="480.8" r="16" fill="#78ae7d"/><g transform="translate(221 496) rotate(8)"><path d="M-9.5 9.5 L-9.5 0.0 A9.5 9.5 0 0 1 9.5 0.0 L9.5 9.5 Z" fill="#489c30" stroke="#357f33" stroke-width="1.2"/></g><polyline points="241.6,460.5 241.8,479.0" fill="none" stroke="#4ca838" stroke-width="2.4" stroke-linejoin="miter" stroke-linecap="butt"/><polyline points="217.0,437.0 250.0,456.0" fill="none" stroke="#4a8262" stroke-width="2" stroke-linejoin="miter" stroke-linecap="butt"/><circle cx="283.6" cy="511.5" r="8" fill="#3b8b34"/><path d="M298.0 548.0L295.9 552.5M298.0 548.0L292.0 547.8M298.0 548.0L296.3 543.4M298.0 548.0L303.0 545.3M298.0 548.0L302.7 551.0" stroke="#2f7545" stroke-width="2" fill="none"/><path d="M277.0 566.0L277.0 571.6M277.0 566.0L270.3 567.7M277.0 566.0L272.9 561.5M277.0 566.0L281.1 561.5M277.0 566.0L283.7 567.7" stroke="#2f7545" stroke-width="2" fill="none"/><circle cx="281" cy="530.7" r="15.7" fill="#78ae7d"/><g transform="translate(281 547) rotate(4)"><path d="M-9.0 10.0 L-9.0 -1.0 A9.0 9.0 0 0 1 9.0 -1.0 L9.0 10.0 Z" fill="#489c30" stroke="#357f33" stroke-width="1.2"/></g><polyline points="297.0,485.0 330.0,504.0" fill="none" stroke="#4a8262" stroke-width="2" stroke-linejoin="miter" stroke-linecap="butt"/><polyline points="312.3,522.0 312.6,536.0" fill="none" stroke="#4ca838" stroke-width="2.4" stroke-linejoin="miter" stroke-linecap="butt"/><g transform="translate(369.7 202.8) rotate(38.5)"><rect x="0" y="0" width="222" height="60.8" fill="#b5dba1"/><rect x="0" y="0" width="10" height="60.8" fill="#5cb82e"/><rect x="214.6" y="0" width="7.4" height="60.8" fill="#5cb82e"/><rect x="68.4" y="0" width="7.5" height="56" fill="#5cb82e"/><rect x="75.8" y="5" width="7.4" height="55.8" fill="#3f7d1e"/><rect x="141" y="0" width="8" height="56" fill="#3f7d1e"/><rect x="149" y="4" width="7.6" height="56.8" fill="#5cb82e"/><path d="M23.5 62.2 V6.7 Q23.5 2.2 28.0 2.2 H44.2 Q48.7 2.2 48.7 6.7 V62.2Z" fill="#a4a4b0"/><path d="M24.4 62.6 V7.2 Q24.4 3.2 28.4 3.2 H43.8 Q47.8 3.2 47.8 7.2 V62.6Z" fill="#edeaf2"/><path d="M98.69999999999999 62.2 V6.7 Q98.69999999999999 2.2 103.19999999999999 2.2 H119.39999999999999 Q123.89999999999999 2.2 123.89999999999999 6.7 V62.2Z" fill="#a4a4b0"/><path d="M99.6 62.6 V7.2 Q99.6 3.2 103.6 3.2 H119.0 Q123.0 3.2 123.0 7.2 V62.6Z" fill="#edeaf2"/><path d="M173.29999999999998 62.2 V6.7 Q173.29999999999998 2.2 177.79999999999998 2.2 H193.99999999999997 Q198.49999999999997 2.2 198.49999999999997 6.7 V62.2Z" fill="#a4a4b0"/><path d="M174.2 62.6 V7.2 Q174.2 3.2 178.2 3.2 H193.6 Q197.6 3.2 197.6 7.2 V62.6Z" fill="#edeaf2"/><path d="M6 30h4M72 30h4M151 30h4M216 30h4" stroke="#234" stroke-width="0.8"/></g><circle cx="46" cy="327" r="6.5" fill="#f4f6f6"/><path d="M45 334.5 q6 -1 7 -6" fill="none" stroke="#333" stroke-width="0.8"/><g transform="translate(66 328) rotate(57)"><rect x="0" y="0" width="35" height="46" rx="3" fill="#5aab28"/><rect x="0" y="0" width="35" height="5" rx="2.5" fill="#66b82e"/><path d="M17 10 h18 v24 h-18z" fill="#4b9422"/><path d="M28 4 h7 v8 h-7z" fill="#4f9a24"/><path d="M17 10 h12 v18 h-12z" fill="#468a1e"/></g><polygon points="60.0,404.0 104.0,378.0 113.0,386.0 70.0,414.0" fill="#c5d6e6" /><polygon points="58.4,399.6 102.3,373.2 109.6,382.6 66.2,409.6" fill="#bfbfc4" /><polygon points="58.4,399.6 102.3,373.2 103.0,375.0 59.4,401.4" fill="#e9e9ec" /><polygon points="53.0,392.6 97.0,366.4 102.3,373.2 58.4,399.6" fill="#2a3838" /><polyline points="81.7,386.4 86.6,396.6" fill="none" stroke="#d8d8dc" stroke-width="1" stroke-linejoin="miter" stroke-linecap="butt"/><path d="M67.0 387.6 Q60.1 382.4 56.2 376.3 Q61.8 380.5 68.7 385.7Z" fill="#183626"/><path d="M74.1 382.1 Q69.6 378.3 67.6 373.1 Q72.3 375.5 76.8 379.3Z" fill="#2f8f70"/><path d="M58.0 390.3 Q63.4 385.2 71.7 381.7 Q66.0 388.4 60.7 393.5Z" fill="#7fd2ba"/><path d="M57.0 393.4 Q51.9 389.0 51.5 383.4 Q55.0 386.6 60.0 391.0Z" fill="#1d4a32"/><path d="M62.1 390.7 Q56.6 383.2 59.3 375.4 Q59.0 382.6 64.5 390.1Z" fill="#4f9a2c"/><path d="M63.4 389.2 Q60.1 381.8 58.9 373.8 Q62.8 380.7 66.2 388.1Z" fill="#36a384"/><path d="M88.9 371.9 Q93.1 364.3 93.0 357.0 Q96.7 364.9 92.6 372.4Z" fill="#122a1e"/><path d="M68.0 385.2 Q63.7 376.6 66.6 367.6 Q66.9 376.0 71.2 384.7Z" fill="#183626"/><path d="M55.6 394.5 Q55.5 385.2 60.2 376.2 Q59.1 385.8 59.2 395.1Z" fill="#2f8f70"/><path d="M80.1 377.4 Q86.2 369.8 94.1 363.3 Q89.0 372.1 82.9 379.7Z" fill="#7fd2ba"/><path d="M57.6 392.3 Q63.6 387.2 74.0 383.3 Q65.4 389.8 59.3 394.9Z" fill="#1d4a32"/><path d="M81.0 377.7 Q74.2 373.1 75.9 367.5 Q77.2 370.9 84.0 375.5Z" fill="#4f9a2c"/><path d="M58.4 389.4 Q61.4 385.3 66.6 382.2 Q64.0 387.4 61.0 391.6Z" fill="#36a384"/><path d="M93.3 373.8 Q89.2 367.3 89.1 360.0 Q92.8 365.6 97.0 372.1Z" fill="#122a1e"/><path d="M94.2 368.4 Q91.0 363.0 89.6 356.7 Q94.0 361.2 97.2 366.6Z" fill="#183626"/><path d="M62.8 387.6 Q64.4 380.0 60.5 371.9 Q67.9 379.1 66.3 386.7Z" fill="#2f8f70"/><path d="M76.9 383.3 Q71.6 377.2 63.0 369.6 Q74.0 374.1 79.4 380.2Z" fill="#7fd2ba"/><path d="M88.8 373.7 Q79.4 367.9 77.9 361.2 Q81.2 366.1 90.6 372.0Z" fill="#1d4a32"/><path d="M62.0 389.1 Q55.5 385.7 55.6 381.4 Q57.3 383.8 63.7 387.2Z" fill="#4f9a2c"/><path d="M67.6 386.4 Q66.9 380.8 71.6 375.4 Q69.9 381.4 70.6 387.1Z" fill="#36a384"/><path d="M68.8 385.5 Q74.7 381.3 81.6 378.1 Q76.2 383.4 70.2 387.6Z" fill="#122a1e"/><path d="M57.2 389.4 Q56.8 384.7 65.7 381.1 Q60.1 387.1 60.5 391.8Z" fill="#183626"/><path d="M75.6 382.3 Q73.3 377.6 64.4 371.4 Q75.7 374.5 78.0 379.1Z" fill="#2f8f70"/><path d="M83.2 376.6 Q77.8 369.5 73.4 361.3 Q80.8 367.2 86.2 374.2Z" fill="#7fd2ba"/><path d="M67.3 385.7 Q77.6 380.4 84.0 376.6 Q79.8 383.6 69.5 388.9Z" fill="#1d4a32"/><path d="M85.1 375.4 Q79.9 370.4 83.7 365.0 Q82.7 369.6 87.9 374.6Z" fill="#4f9a2c"/><path d="M65.1 390.1 Q68.0 380.5 65.0 370.6 Q72.1 380.1 69.2 389.7Z" fill="#36a384"/><path d="M68.2 384.6 Q65.9 379.5 63.3 373.3 Q69.3 377.3 71.6 382.4Z" fill="#122a1e"/><path d="M90.2 371.9 Q94.4 367.3 97.7 363.8 Q97.8 369.5 93.6 374.1Z" fill="#183626"/><path d="M88.9 374.8 Q82.0 367.6 79.4 359.2 Q85.1 365.3 91.9 372.5Z" fill="#2f8f70"/><path d="M96.5 367.2 Q100.7 361.7 111.0 357.2 Q102.4 363.7 98.2 369.3Z" fill="#7fd2ba"/><path d="M61.9 393.2 Q59.7 386.2 51.1 378.0 Q62.4 383.8 64.6 390.8Z" fill="#1d4a32"/><path d="M69.7 384.8 Q62.5 379.1 53.9 372.1 Q64.4 376.3 71.5 382.0Z" fill="#4f9a2c"/><path d="M94.6 370.8 Q96.2 365.8 103.0 361.7 Q98.6 367.5 97.0 372.5Z" fill="#36a384"/><circle cx="55.4" cy="614.4" r="9.5" fill="#3f8a1e"/><polygon points="83.6,605.6 45.0,625.6 45.0,652.0 108.8,652.0" fill="#f8fafc" /><path d="M96.6 627.3 L55 650.5" stroke="#222" stroke-width="1"/><circle cx="80.5" cy="650" r="8.5" fill="#6bb02a"/><g transform="translate(553.9 603.2) rotate(33.7)"><rect x="1.5" y="1" width="35" height="62" rx="4" fill="#aeb8c8"/><rect x="0" y="0" width="34.6" height="62" rx="4" fill="#f8fafd"/></g><path d="M519.1 611.4 v8 a7.6 4.4 0 0 0 15.2 0 v-8z" fill="#5cb82a"/><ellipse cx="526.7" cy="611.4" rx="7.6" ry="4.4" fill="#b3db98"/><path d="M569.6999999999999 597.2 v8 a7.6 4.4 0 0 0 15.2 0 v-8z" fill="#5cb82a"/><ellipse cx="577.3" cy="597.2" rx="7.6" ry="4.4" fill="#b3db98"/><path d="M507.0 633.6 v8 a7.6 4.4 0 0 0 15.2 0 v-8z" fill="#5cb82a"/><ellipse cx="514.6" cy="633.6" rx="7.6" ry="4.4" fill="#b3db98"/><path d="M577.9 645.4 v8 a7.6 4.4 0 0 0 15.2 0 v-8z" fill="#5cb82a"/><ellipse cx="585.5" cy="645.4" rx="7.6" ry="4.4" fill="#b3db98"/><text x="480.4" y="96" font-size="21.5" fill="#ffffff" text-anchor="middle" font-weight="bold" textLength="44.0" lengthAdjust="spacingAndGlyphs" stroke="#ffffff" stroke-width="0.5">2.02</text><text x="592.9" y="134.4" font-size="21.5" fill="#ffffff" text-anchor="middle" font-weight="bold" textLength="123.3" lengthAdjust="spacingAndGlyphs" stroke="#ffffff" stroke-width="0.5">Stonehenge</text><text x="592.6" y="163.4" font-size="21.5" fill="#ffffff" text-anchor="middle" font-weight="bold" textLength="43.0" lengthAdjust="spacingAndGlyphs" stroke="#ffffff" stroke-width="0.5">2.03</text><text x="368.5" y="395.8" font-size="21.5" fill="#ffffff" text-anchor="middle" font-weight="bold" textLength="57.8" lengthAdjust="spacingAndGlyphs" stroke="#ffffff" stroke-width="0.5">Uluru</text><text x="368.3" y="424.4" font-size="21.5" fill="#ffffff" text-anchor="middle" font-weight="bold" textLength="43.5" lengthAdjust="spacingAndGlyphs" stroke="#ffffff" stroke-width="0.5">2.04</text><text x="210.7" y="488.4" font-size="21.5" fill="#ffffff" text-anchor="middle" font-weight="bold" textLength="56.0" lengthAdjust="spacingAndGlyphs" stroke="#ffffff" stroke-width="0.5">Iguaz</text><text x="210.9" y="517.4" font-size="21.5" fill="#ffffff" text-anchor="middle" font-weight="bold" textLength="47.3" lengthAdjust="spacingAndGlyphs" stroke="#ffffff" stroke-width="0.5">Falls</text><text x="209.6" y="546.1" font-size="21.5" fill="#ffffff" text-anchor="middle" font-weight="bold" textLength="43.2" lengthAdjust="spacingAndGlyphs" stroke="#ffffff" stroke-width="0.5">2.05</text><text x="295.8" y="523.8" font-size="21.5" fill="#ffffff" text-anchor="middle" font-weight="bold" textLength="40.0" lengthAdjust="spacingAndGlyphs" stroke="#ffffff" stroke-width="0.5">Abu</text><text x="296" y="552.6" font-size="21.5" fill="#ffffff" text-anchor="middle" font-weight="bold" textLength="72.0" lengthAdjust="spacingAndGlyphs" stroke="#ffffff" stroke-width="0.5">Simbel</text><text x="295.8" y="581.4" font-size="21.5" fill="#ffffff" text-anchor="middle" font-weight="bold" textLength="43.6" lengthAdjust="spacingAndGlyphs" stroke="#ffffff" stroke-width="0.5">2.06</text><text x="377.5" y="590" font-size="21.5" fill="#ffffff" text-anchor="middle" font-weight="bold" textLength="59.0" lengthAdjust="spacingAndGlyphs" stroke="#ffffff" stroke-width="0.5">Focus</text></g></svg><div class="abs" style="left:2px;top:64px;width:32px;height:594.4px;background:linear-gradient(90deg,#474747 0,#474747 26px,#383838 32px)"></div><div class="abs" style="left:2px;top:54px;width:32px;height:10px;background:#3b3b3b"></div><svg style="left:0;top:0" width="40" height="660"><path d="M4.4 57 l2.1 2.1 l-2.1 2.1 M7.8 57 l2.1 2.1 l-2.1 2.1" fill="none" stroke="#bdbdbd" stroke-width="0.9"/><path d="M8.5 68.3h15" stroke="#3a3a3a" stroke-width="1.6" stroke-dasharray="1 1"/><rect x="6" y="80" width="21" height="17.4" rx="1" fill="#2c2c2c"/><path d="M12.6 83.2 L12.6 95 L15.6 91.6 L21.6 91.4 Z" fill="none" stroke="#f0f0f0" stroke-width="1.1" stroke-linejoin="miter"/><path d="M11.8 101 L11.8 115.2 L15.4 111.2 L22.2 111.2 Z" fill="#c6c6c6"/><path d="M27 116 v-2.6 l-2.6 2.6z" fill="#c6c6c6"/><g transform="translate(16.2 127) rotate(40)"><path d="M-3 -7.6 h6 v3 h-6z M-3.6 -3.6 h7.2 l1.4 5.4 l-5 6.6 l-5 -6.6z" fill="#c6c6c6"/><path d="M0 8.4 v-5" stroke="#474747" stroke-width="0.9"/><circle cx="0" cy="2.6" r="1" fill="#474747"/></g><path d="M27 134.8 v-2.6 l-2.6 2.6z" fill="#c6c6c6"/><g transform="translate(18 146.4) rotate(40)"><path d="M-3 -7.6 h6 v3 h-6z M-3.6 -3.6 h7.2 l1.4 5.4 l-5 6.6 l-5 -6.6z" fill="#c6c6c6"/><path d="M0 8.4 v-5" stroke="#474747" stroke-width="0.9"/><circle cx="0" cy="2.6" r="1" fill="#474747"/></g><path d="M9.4 140.6 q2.2 3.4 0.6 6.6 q-1.6 3.6 2.4 4.4" fill="none" stroke="#c6c6c6" stroke-width="1"/><rect x="10.4" y="159.6" width="12" height="10.6" fill="#6c6c6c" stroke="#b4b4b4" stroke-width="1.1"/><path d="M27 173 v-2.6 l-2.6 2.6z" fill="#c6c6c6"/><path d="M22.6 177.6 q0.8 0.6 0.2 1.6 l-5.6 7 l-2 -1.6 l5.8 -6.8 q0.8 -0.8 1.6 -0.2z M14.2 185.4 l2 1.6 q-0.2 2.8 -3 3 q-1.8 0.2 -3 -0.4 q2 -0.8 2 -2.4 q0.4 -1.6 2 -1.8z" fill="#c6c6c6"/><path d="M27 192.4 v-2.6 l-2.6 2.6z" fill="#c6c6c6"/><path d="M10.6 197.2 h11.4 v3 h-1 q-0.2 -1.6 -1.6 -1.6 h-2 v9 q0 1 1.6 1 v0.9 h-5.4 v-0.9 q1.6 0 1.6 -1 v-9 h-2 q-1.4 0 -1.6 1.6 h-1z" fill="#c6c6c6"/><path d="M27 211.6 v-2.6 l-2.6 2.6z" fill="#c6c6c6"/><path d="M12.6 220 a5.4 5.4 0 1 1 -1.2 6" fill="none" stroke="#c6c6c6" stroke-width="1.2"/><path d="M10 216.6 l0.6 4.6 l4.4 -1z" fill="#c6c6c6"/><path d="M11.4 226 a5.4 5.4 0 0 0 4 2.8" fill="none" stroke="#888" stroke-width="1" stroke-dasharray="1.2 1.2"/><path d="M27 230.4 v-2.6 l-2.6 2.6z" fill="#c6c6c6"/><g transform="translate(16.4 240.4) rotate(-52)"><rect x="-6.4" y="-4.4" width="12.8" height="8.8" fill="#c6c6c6"/><rect x="-5.6" y="-3.4" width="3.6" height="6.8" fill="#474747"/></g><path d="M27 249.4 v-2.6 l-2.6 2.6z" fill="#c6c6c6"/><circle cx="14" cy="259" r="4" fill="none" stroke="#c6c6c6" stroke-width="1"/><circle cx="18" cy="259.4" r="4" fill="none" stroke="#c6c6c6" stroke-width="1"/><path d="M18.6 259.6 l0 7.4 l2 -2 l3.6 0.2z" fill="#c6c6c6"/><defs><linearGradient id="tg" x1="0" x2="1"><stop offset="0" stop-color="#222"/><stop offset="1" stop-color="#e8e8e8"/></linearGradient><linearGradient id="tg2" x1="0" x2="1"><stop offset="0" stop-color="#111"/><stop offset="1" stop-color="#fff"/></linearGradient></defs><rect x="10.4" y="274.2" width="12" height="10.8" fill="url(#tg)" stroke="#b4b4b4" stroke-width="1"/><path d="M27 287.4 v-2.6 l-2.6 2.6z" fill="#c6c6c6"/><path d="M21.4 292.2 q1.4 1 0.6 2.4 l-2.4 2.6 l0.6 0.8 l-1 1 l-0.8 -0.6 l-6 6.4 q-1.2 0.6 -2 0.4 q-0.4 -1 0.2 -2 l6.2 -6.2 l-0.8 -0.8 l1 -1 l0.8 0.6 l2.4 -2.8 q0.6 -0.8 1.2 -0.8z" fill="none" stroke="#c6c6c6" stroke-width="1"/><path d="M21.4 292.2 q1.4 1 0.6 2.4 l-2.4 2.6 l-2.2 -2 l2.6 -2.6 q0.8 -0.8 1.4 -0.4z" fill="#c6c6c6"/><path d="M10 322.6 q3 -0.6 4.6 -3.2 q1.6 -2.8 -1 -4.4 q2.6 -1.6 4 0.8 q1 1.8 -0.4 3.6 q-1.6 2.4 0.8 3 q2 0.2 2.4 -2 q0.4 -2.4 2.8 -1.6" fill="none" stroke="#c6c6c6" stroke-width="1.7"/><path d="M9.4 318 l2.4 -1.4 M15.2 312.8 l1.6 -1" stroke="#c6c6c6" stroke-width="1.3"/><rect x="9.4" y="331.4" width="6" height="6" fill="#c6c6c6"/><circle cx="16.6" cy="336.4" r="3.1" fill="#8a8a8a"/><circle cx="20.4" cy="339" r="3" fill="#474747" stroke="#c6c6c6" stroke-width="1"/><path d="M12.4 348.4 v4 M8.6 352.4 h4" stroke="#c6c6c6" stroke-width="1"/><path d="M12.8 352.8 h6 l3 3 v4.8 h-9z" fill="#7a7a7a" stroke="#c6c6c6" stroke-width="1"/><circle cx="14.6" cy="373" r="4.4" fill="none" stroke="#c6c6c6" stroke-width="1.2"/><path d="M17.8 376.4 l4.4 4.4" stroke="#c6c6c6" stroke-width="1.6"/><rect x="24.4" y="381" width="1.6" height="1.6" fill="#c6c6c6"/><rect x="7.4" y="392" width="6.4" height="6.4" fill="#111" stroke="#ddd" stroke-width="1"/><rect x="4.8" y="389.4" width="6" height="6" fill="#fff" stroke="#999" stroke-width="0.6"/><path d="M22.4 392.2 h3 q1.6 0 1.6 1.6 v3.6" fill="none" stroke="#666" stroke-width="1"/><rect x="4.6" y="404.4" width="15.4" height="14.6" fill="#3e3e3e" stroke="#585858" stroke-width="0.8"/><rect x="12.8" y="412.2" width="15.2" height="15" fill="#fff"/><rect x="17.2" y="416.6" width="6.4" height="6.2" fill="#151515"/><path d="M13.2 426.6 L27.6 412.6" stroke="#e8141c" stroke-width="1.6"/><rect x="6" y="433.4" width="6.6" height="6.8" fill="#0e0e0e"/><rect x="7.8" y="435.2" width="3" height="3" fill="#333"/><rect x="13.2" y="433.4" width="6.4" height="6.8" fill="url(#tg2)"/><rect x="20.2" y="433.4" width="6.8" height="6.8" fill="#fff"/><path d="M20.4 440 L26.8 433.6" stroke="#e8141c" stroke-width="1.3"/><circle cx="14.6" cy="450.8" r="2.8" fill="none" stroke="#c6c6c6" stroke-width="1"/><rect x="15.6" y="451.6" width="4.6" height="4" fill="#c6c6c6"/><rect x="9.4" y="470.4" width="8.6" height="5.8" fill="#6a6a6a" stroke="#a8a8a8" stroke-width="1"/><rect x="14.6" y="466.4" width="8.6" height="6.8" fill="#6a6a6a" stroke="#c6c6c6" stroke-width="1.1"/><rect x="10.4" y="495.8" width="2.2" height="2.2" fill="#c6c6c6"/><rect x="14.8" y="495.8" width="2.2" height="2.2" fill="#c6c6c6"/><rect x="19.2" y="495.8" width="2.2" height="2.2" fill="#c6c6c6"/></svg><div class="t" style="left:10.40px;top:406.11px;font-size:9.5px;color:#d0d0d0;">?</div><div class="abs" style="left:997px;top:54px;width:149px;height:604px;background:#333333"></div><div class="abs" style="left:996.5px;top:77px;width:12.5px;height:573px;background:#3e3e3e"></div><div class="abs" style="left:1011.5px;top:54px;width:134.5px;height:10px;background:#393939"></div><div class="abs" style="left:1011.5px;top:64px;width:30px;height:54.5px;background:#484848"></div><div class="abs" style="left:1011.5px;top:120px;width:30px;height:538px;background:#484848"></div><div class="abs" style="left:1043.5px;top:64px;width:102.5px;height:594px;background:#484848"></div><div class="abs" style="left:1043.5px;top:95px;width:102.5px;height:1.6px;background:#383838"></div><div class="abs" style="left:1043.5px;top:172.6px;width:102.5px;height:1.6px;background:#383838"></div><div class="abs" style="left:1043.5px;top:248.6px;width:102.5px;height:1.6px;background:#383838"></div><div class="abs" style="left:1043.5px;top:304.6px;width:102.5px;height:1.6px;background:#383838"></div><svg style="left:0;top:0" width="1148" height="330"><path d="M1036 56.8 l-2 2 l2 2 M1033 56.8 l-2 2 l2 2 M1140.4 56.8 l-2 2 l2 2 M1137.4 56.8 l-2 2 l2 2" fill="none" stroke="#c0c0c0" stroke-width="0.9"/><path d="M1001.2 85.2 l2.6 -2.6 l2.6 2.6" fill="none" stroke="#8a8a8a" stroke-width="1"/><path d="M1018.5 67.6h16" stroke="#3a3a3a" stroke-width="1.6" stroke-dasharray="1 1"/><path d="M1086 67.6h16" stroke="#3a3a3a" stroke-width="1.6" stroke-dasharray="1 1"/><path d="M1086 100.4h16" stroke="#3a3a3a" stroke-width="1.6" stroke-dasharray="1 1"/><path d="M1086 178h16" stroke="#3a3a3a" stroke-width="1.6" stroke-dasharray="1 1"/><path d="M1086 254h16" stroke="#3a3a3a" stroke-width="1.6" stroke-dasharray="1 1"/><path d="M1018.5 123.4h16" stroke="#3a3a3a" stroke-width="1.6" stroke-dasharray="1 1"/><path d="M1026.8 76.6 c4.4 0 7.6 2.4 7.6 5.6 c0 2.2 -1.6 3 -3.4 2.6 c-1.6 -0.4 -2.2 0.6 -1.8 1.6 c0.4 1.2 -0.8 1.8 -2.6 1.8 c-4.4 0 -7.4 -2.4 -7.4 -5.8 c0 -3.2 3.2 -5.8 7.6 -5.800z" fill="#cdcdcd"/><circle cx="1023" cy="81" r="1.1" fill="#484848"/><circle cx="1026.4" cy="79.2" r="1.1" fill="#484848"/><circle cx="1030" cy="80" r="1.1" fill="#484848"/><circle cx="1022.8" cy="84.6" r="1.1" fill="#484848"/><circle cx="1026" cy="86" r="1.1" fill="#484848"/><defs><linearGradient id="rg" x1="0" x2="1"><stop offset="0" stop-color="#111"/><stop offset="1" stop-color="#f0f0f0"/></linearGradient></defs><path d="M1021.2 98.8 q11 0.6 12 12 h-12z" fill="url(#rg)" stroke="#d0d0d0" stroke-width="1"/><path d="M1054.6 78 l9.4 4.8 l-9.4 4.800z" fill="#cdcdcd"/><rect x="1052.4" y="111.2" width="8.6" height="6" rx="3" fill="none" stroke="#cdcdcd" stroke-width="1.3"/><rect x="1057.6" y="111.2" width="8.6" height="6" rx="3" fill="none" stroke="#cdcdcd" stroke-width="1.3"/><path d="M1055.4 142.6 a4 4 0 0 1 0.4 -7.8 a5 5 0 0 1 9 -0.6 a4.2 4.2 0 0 1 0.600 8.4z" fill="none" stroke="#cdcdcd" stroke-width="1.4"/><path d="M1056.4 140.2 a2.4 2.4 0 1 1 2.6 -3.6 l3.4 3.200 a2.300 2.300 0 1 0 1.600 -3.800" fill="none" stroke="#cdcdcd" stroke-width="1.2"/><path d="M1053.4 153.2 h7 l3.400 3.400 v10.600 h-10.400z" fill="#cdcdcd"/><circle cx="1058.6" cy="161.6" r="3.200" fill="#484848"/><rect x="1058" y="160.800" width="1.3" height="3" fill="#cdcdcd"/><rect x="1058" y="159" width="1.3" height="1.2" fill="#cdcdcd"/><circle cx="1056.8" cy="195" r="3.400" fill="none" stroke="#cdcdcd" stroke-width="2" stroke-dasharray="1.800 0.900"/><circle cx="1056.8" cy="195" r="2" fill="none" stroke="#cdcdcd" stroke-width="1"/><circle cx="1063" cy="188.6" r="2.400" fill="none" stroke="#cdcdcd" stroke-width="1.7" stroke-dasharray="1.400 0.800"/><circle cx="1059" cy="214.800" r="4.600" fill="#cdcdcd"/><circle cx="1059" cy="214.800" r="6.600" fill="none" stroke="#cdcdcd" stroke-width="1" stroke-dasharray="1.200 1.2"/><path d="M1058.6 231.4 h-5.600 v11.600 h11.600 v-5.600" fill="none" stroke="#cdcdcd" stroke-width="1.3"/><path d="M1057.8 238.2 l7.400 -7.400 M1060.6 230.4 h5 v5" fill="none" stroke="#cdcdcd" stroke-width="1.3"/><rect x="1047" y="261" width="94" height="17" rx="1" fill="#2d2d2d"/><path d="M1059 263.4 l6.400 3.200 l-6.400 3.200 l-6.400 -3.200z" fill="#e4e4e4"/><path d="M1052.6 270 l6.400 3.200 l6.400 -3.200" fill="none" stroke="#e4e4e4" stroke-width="1.3"/><rect x="1053" y="285.600" width="7.600" height="7.600" fill="none" stroke="#cdcdcd" stroke-width="1.1"/><rect x="1057.4" y="290" width="7.600" height="7.600" fill="#484848" stroke="#cdcdcd" stroke-width="1.1"/></svg><div class="t" style="left:1073.00px;top:76.74px;font-size:9.4px;color:#e6e6e6;transform:scaleX(0.8704);transform-origin:0 0;font-weight:bold;">Actions</div><div class="t" style="left:1073.00px;top:109.14px;font-size:9.4px;color:#e6e6e6;transform:scaleX(0.8554);transform-origin:0 0;font-weight:bold;">Links</div><div class="t" style="left:1073.00px;top:131.54px;font-size:9.4px;color:#e6e6e6;transform:scaleX(0.9067);transform-origin:0 0;font-weight:bold;">Libraries</div><div class="t" style="left:1073.00px;top:153.94px;font-size:9.4px;color:#e6e6e6;transform:scaleX(0.9196);transform-origin:0 0;font-weight:bold;">Document Info</div><div class="t" style="left:1073.00px;top:186.34px;font-size:9.4px;color:#e6e6e6;transform:scaleX(0.9326);transform-origin:0 0;font-weight:bold;">Variables</div><div class="t" style="left:1073.00px;top:208.74px;font-size:9.4px;color:#e6e6e6;transform:scaleX(0.8921);transform-origin:0 0;font-weight:bold;">Appearance</div><div class="t" style="left:1073.00px;top:231.14px;font-size:9.4px;color:#e6e6e6;transform:scaleX(0.9055);transform-origin:0 0;font-weight:bold;">Asset Export</div><div class="t" style="left:1073.00px;top:263.54px;font-size:9.4px;color:#e6e6e6;transform:scaleX(0.8908);transform-origin:0 0;font-weight:bold;">Layers</div><div class="t" style="left:1073.00px;top:285.94px;font-size:9.4px;color:#e6e6e6;transform:scaleX(0.9017);transform-origin:0 0;font-weight:bold;">Artboards</div><div class="abs" style="left:667px;top:124px;width:376px;height:527.5px;background:#262626"></div><div class="abs" style="left:668px;top:125px;width:374px;height:525.5px;background:#484848"></div><div class="abs" style="left:668px;top:125px;width:374px;height:23.8px;background:#393939"></div><div class="abs" style="left:668px;top:126px;width:41.5px;height:23px;background:#484848"></div><div class="t" style="left:676.00px;top:132.07px;font-size:9.6px;color:#f2f2f2;transform:scaleX(0.8529);transform-origin:0 0;font-weight:bold;">Layers</div><div class="t" style="left:716.60px;top:132.07px;font-size:9.6px;color:#a6a6a6;transform:scaleX(0.8807);transform-origin:0 0;font-weight:bold;">Artboards</div><svg style="left:0;top:0" width="1148" height="660"><rect x="673" y="169.78" width="354.5" height="1" fill="#3d3d3d"/><rect x="708" y="154.10" width="2.5" height="15.68" fill="#4a6df0"/><path d="M677.2 161.90 q4.2 -5.6 8.4 0 q-4.2 5.6 -8.4 0z" fill="none" stroke="#d6d6d6" stroke-width="1.4"/><circle cx="681.4" cy="161.90" r="1.4" fill="none" stroke="#d6d6d6" stroke-width="1.3"/><path d="M716.8 160.30 l3.2 3.2 l3.2 -3.2" fill="none" stroke="#e0e0e0" stroke-width="1.2"/><rect x="731.6" y="155.30" width="13.2" height="13.2" fill="#ffffff" stroke="#1c1c1c" stroke-width="1"/><circle cx="1007.4" cy="162.30" r="3.1" fill="none" stroke="#d0d0d0" stroke-width="1.1"/><rect x="673" y="186.46" width="354.5" height="1" fill="#3d3d3d"/><rect x="708" y="170.78" width="2.5" height="15.68" fill="#4a6df0"/><path d="M735.2 175.38 l3.2 3.2 l-3.2 3.2" fill="none" stroke="#e0e0e0" stroke-width="1.2"/><rect x="749.6" y="171.98" width="13.2" height="13.2" fill="#ffffff" stroke="#1c1c1c" stroke-width="1"/><circle cx="1007.4" cy="178.98" r="3.1" fill="none" stroke="#d0d0d0" stroke-width="1.1"/><rect x="673" y="203.14" width="354.5" height="1" fill="#3d3d3d"/><rect x="708" y="187.46" width="2.5" height="15.68" fill="#4a6df0"/><path d="M677.2 195.26 q4.2 -5.6 8.4 0 q-4.2 5.6 -8.4 0z" fill="none" stroke="#d6d6d6" stroke-width="1.4"/><circle cx="681.4" cy="195.26" r="1.4" fill="none" stroke="#d6d6d6" stroke-width="1.3"/><path d="M735.2 192.06 l3.2 3.2 l-3.2 3.2" fill="none" stroke="#e0e0e0" stroke-width="1.2"/><rect x="749.6" y="188.66" width="13.2" height="13.2" fill="#ffffff" stroke="#1c1c1c" stroke-width="1"/><circle cx="1007.4" cy="195.66" r="3.1" fill="none" stroke="#d0d0d0" stroke-width="1.1"/><rect x="673" y="219.82" width="354.5" height="1" fill="#3d3d3d"/><rect x="708" y="204.14" width="2.5" height="15.68" fill="#4a6df0"/><path d="M735.2 208.74 l3.2 3.2 l-3.2 3.2" fill="none" stroke="#e0e0e0" stroke-width="1.2"/><rect x="749.6" y="205.34" width="13.2" height="13.2" fill="#ffffff" stroke="#1c1c1c" stroke-width="1"/><path d="M751.6 214.34 l3 -5 l5 2 l1.5 4z" fill="#e8b85a"/><path d="M751.6 210.34 l3 -2 l6 1" fill="none" stroke="#e0584c" stroke-width="1.4"/><path d="M755.6 214.34 l4 0 l1 -3" fill="none" stroke="#6cb66a" stroke-width="1.4"/><circle cx="1007.4" cy="212.34" r="3.1" fill="none" stroke="#d0d0d0" stroke-width="1.1"/><rect x="673" y="236.50" width="354.5" height="1" fill="#3d3d3d"/><rect x="708" y="220.82" width="2.5" height="15.68" fill="#4a6df0"/><path d="M677.2 228.62 q4.2 -5.6 8.4 0 q-4.2 5.6 -8.4 0z" fill="none" stroke="#d6d6d6" stroke-width="1.4"/><circle cx="681.4" cy="228.62" r="1.4" fill="none" stroke="#d6d6d6" stroke-width="1.3"/><path d="M735.2 225.42 l3.2 3.2 l-3.2 3.2" fill="none" stroke="#e0e0e0" stroke-width="1.2"/><rect x="749.6" y="222.02" width="13.2" height="13.2" fill="#ffffff" stroke="#1c1c1c" stroke-width="1"/><circle cx="1007.4" cy="229.02" r="3.1" fill="none" stroke="#d0d0d0" stroke-width="1.1"/><rect x="673" y="253.18" width="354.5" height="1" fill="#3d3d3d"/><rect x="708" y="237.50" width="2.5" height="15.68" fill="#4a6df0"/><path d="M677.2 245.30 q4.2 -5.6 8.4 0 q-4.2 5.6 -8.4 0z" fill="none" stroke="#d6d6d6" stroke-width="1.4"/><circle cx="681.4" cy="245.30" r="1.4" fill="none" stroke="#d6d6d6" stroke-width="1.3"/><path d="M733.4 243.70 l3.2 3.2 l3.2 -3.2" fill="none" stroke="#e0e0e0" stroke-width="1.2"/><rect x="749.6" y="238.70" width="13.2" height="13.2" fill="#ffffff" stroke="#1c1c1c" stroke-width="1"/><path d="M751.6 242.70h1.5M753.6 245.70h1M758.6 246.70h2M759.6 248.70h1.5M752.6 248.70h1" stroke="#5a8a5a" stroke-width="1.2"/><circle cx="1007.4" cy="245.70" r="3.1" fill="none" stroke="#d0d0d0" stroke-width="1.1"/><rect x="711" y="254.18" width="316.5" height="15.68" fill="#3d3d3d"/><rect x="673" y="269.86" width="354.5" height="1" fill="#3d3d3d"/><rect x="708" y="254.18" width="2.5" height="15.68" fill="#4a6df0"/><path d="M677.2 261.98 q4.2 -5.6 8.4 0 q-4.2 5.6 -8.4 0z" fill="none" stroke="#d6d6d6" stroke-width="1.4"/><circle cx="681.4" cy="261.98" r="1.4" fill="none" stroke="#d6d6d6" stroke-width="1.3"/><path d="M753.6 258.78 l3.2 3.2 l-3.2 3.2" fill="none" stroke="#e0e0e0" stroke-width="1.2"/><rect x="768" y="255.38" width="13.2" height="13.2" fill="#ffffff" stroke="#1c1c1c" stroke-width="1"/><circle cx="1007.4" cy="262.38" r="3.1" fill="none" stroke="#d0d0d0" stroke-width="1.1"/><rect x="673" y="270.36" width="354.5" height="16.68" fill="#465a7a"/><rect x="673" y="286.54" width="354.5" height="0.8" fill="#40526f"/><rect x="708" y="270.86" width="2.5" height="15.68" fill="#4a6df0"/><path d="M677.2 278.66 q4.2 -5.6 8.4 0 q-4.2 5.6 -8.4 0z" fill="none" stroke="#d6d6d6" stroke-width="1.4"/><circle cx="681.4" cy="278.66" r="1.4" fill="none" stroke="#d6d6d6" stroke-width="1.3"/><rect x="768" y="272.06" width="13.2" height="13.2" fill="#ffffff" stroke="#1c1c1c" stroke-width="1"/><rect x="769.9" y="273.96" width="9.4" height="9.4" fill="#5f9c68" transform="rotate(25 774.6 278.66)"/><circle cx="1007.4" cy="279.06" r="3.3" fill="#8e8e8e" stroke="#b0b0b0" stroke-width="0.8"/><rect x="673" y="287.04" width="354.5" height="16.68" fill="#465a7a"/><rect x="673" y="303.22" width="354.5" height="0.8" fill="#40526f"/><rect x="708" y="287.54" width="2.5" height="15.68" fill="#4a6df0"/><path d="M677.2 295.34 q4.2 -5.6 8.4 0 q-4.2 5.6 -8.4 0z" fill="none" stroke="#d6d6d6" stroke-width="1.4"/><circle cx="681.4" cy="295.34" r="1.4" fill="none" stroke="#d6d6d6" stroke-width="1.3"/><rect x="768" y="288.74" width="13.2" height="13.2" fill="#ffffff" stroke="#1c1c1c" stroke-width="1"/><rect x="769.9" y="290.64" width="9.4" height="9.4" fill="#5f9c68" transform="rotate(25 774.6 295.34)"/><circle cx="1007.4" cy="295.74" r="3.3" fill="#8e8e8e" stroke="#b0b0b0" stroke-width="0.8"/><rect x="673" y="303.72" width="354.5" height="16.68" fill="#465a7a"/><rect x="673" y="319.90" width="354.5" height="0.8" fill="#40526f"/><rect x="708" y="304.22" width="2.5" height="15.68" fill="#4a6df0"/><path d="M677.2 312.02 q4.2 -5.6 8.4 0 q-4.2 5.6 -8.4 0z" fill="none" stroke="#d6d6d6" stroke-width="1.4"/><circle cx="681.4" cy="312.02" r="1.4" fill="none" stroke="#d6d6d6" stroke-width="1.3"/><rect x="768" y="305.42" width="13.2" height="13.2" fill="#ffffff" stroke="#1c1c1c" stroke-width="1"/><rect x="769.9" y="307.32" width="9.4" height="9.4" fill="#5f9c68" transform="rotate(25 774.6 312.02)"/><circle cx="1007.4" cy="312.42" r="3.3" fill="#8e8e8e" stroke="#b0b0b0" stroke-width="0.8"/><rect x="673" y="320.40" width="354.5" height="16.68" fill="#465a7a"/><rect x="673" y="336.58" width="354.5" height="0.8" fill="#40526f"/><rect x="708" y="320.90" width="2.5" height="15.68" fill="#4a6df0"/><path d="M677.2 328.70 q4.2 -5.6 8.4 0 q-4.2 5.6 -8.4 0z" fill="none" stroke="#d6d6d6" stroke-width="1.4"/><circle cx="681.4" cy="328.70" r="1.4" fill="none" stroke="#d6d6d6" stroke-width="1.3"/><rect x="768" y="322.10" width="13.2" height="13.2" fill="#ffffff" stroke="#1c1c1c" stroke-width="1"/><rect x="769.9" y="324.00" width="9.4" height="9.4" fill="#5f9c68" transform="rotate(25 774.6 328.70)"/><circle cx="1007.4" cy="329.10" r="3.3" fill="#8e8e8e" stroke="#b0b0b0" stroke-width="0.8"/><rect x="673" y="337.08" width="354.5" height="16.68" fill="#465a7a"/><rect x="673" y="353.26" width="354.5" height="0.8" fill="#40526f"/><rect x="708" y="337.58" width="2.5" height="15.68" fill="#4a6df0"/><path d="M677.2 345.38 q4.2 -5.6 8.4 0 q-4.2 5.6 -8.4 0z" fill="none" stroke="#d6d6d6" stroke-width="1.4"/><circle cx="681.4" cy="345.38" r="1.4" fill="none" stroke="#d6d6d6" stroke-width="1.3"/><rect x="768" y="338.78" width="13.2" height="13.2" fill="#ffffff" stroke="#1c1c1c" stroke-width="1"/><rect x="769.9" y="340.68" width="9.4" height="9.4" fill="#5f9c68" transform="rotate(25 774.6 345.38)"/><circle cx="1007.4" cy="345.78" r="3.3" fill="#8e8e8e" stroke="#b0b0b0" stroke-width="0.8"/><rect x="673" y="353.76" width="354.5" height="16.68" fill="#465a7a"/><rect x="673" y="369.94" width="354.5" height="0.8" fill="#40526f"/><rect x="708" y="354.26" width="2.5" height="15.68" fill="#4a6df0"/><path d="M677.2 362.06 q4.2 -5.6 8.4 0 q-4.2 5.6 -8.4 0z" fill="none" stroke="#d6d6d6" stroke-width="1.4"/><circle cx="681.4" cy="362.06" r="1.4" fill="none" stroke="#d6d6d6" stroke-width="1.3"/><rect x="768" y="355.46" width="13.2" height="13.2" fill="#ffffff" stroke="#1c1c1c" stroke-width="1"/><rect x="769.9" y="357.36" width="9.4" height="9.4" fill="#5f9c68" transform="rotate(25 774.6 362.06)"/><circle cx="1007.4" cy="362.46" r="3.3" fill="#8e8e8e" stroke="#b0b0b0" stroke-width="0.8"/><rect x="673" y="370.44" width="354.5" height="16.68" fill="#465a7a"/><rect x="673" y="386.62" width="354.5" height="0.8" fill="#40526f"/><rect x="708" y="370.94" width="2.5" height="15.68" fill="#4a6df0"/><path d="M677.2 378.74 q4.2 -5.6 8.4 0 q-4.2 5.6 -8.4 0z" fill="none" stroke="#d6d6d6" stroke-width="1.4"/><circle cx="681.4" cy="378.74" r="1.4" fill="none" stroke="#d6d6d6" stroke-width="1.3"/><rect x="768" y="372.14" width="13.2" height="13.2" fill="#ffffff" stroke="#1c1c1c" stroke-width="1"/><rect x="769.9" y="374.04" width="9.4" height="9.4" fill="#5f9c68" transform="rotate(25 774.6 378.74)"/><circle cx="1007.4" cy="379.14" r="3.3" fill="#8e8e8e" stroke="#b0b0b0" stroke-width="0.8"/><rect x="673" y="387.12" width="354.5" height="16.68" fill="#465a7a"/><rect x="673" y="403.30" width="354.5" height="0.8" fill="#40526f"/><rect x="708" y="387.62" width="2.5" height="15.68" fill="#4a6df0"/><path d="M677.2 395.42 q4.2 -5.6 8.4 0 q-4.2 5.6 -8.4 0z" fill="none" stroke="#d6d6d6" stroke-width="1.4"/><circle cx="681.4" cy="395.42" r="1.4" fill="none" stroke="#d6d6d6" stroke-width="1.3"/><rect x="768" y="388.82" width="13.2" height="13.2" fill="#ffffff" stroke="#1c1c1c" stroke-width="1"/><rect x="769.9" y="390.72" width="9.4" height="9.4" fill="#5f9c68" transform="rotate(25 774.6 395.42)"/><circle cx="1007.4" cy="395.82" r="3.3" fill="#8e8e8e" stroke="#b0b0b0" stroke-width="0.8"/><rect x="673" y="419.98" width="354.5" height="1" fill="#3d3d3d"/><rect x="708" y="404.30" width="2.5" height="15.68" fill="#4a6df0"/><path d="M677.2 412.10 q4.2 -5.6 8.4 0 q-4.2 5.6 -8.4 0z" fill="none" stroke="#d6d6d6" stroke-width="1.4"/><circle cx="681.4" cy="412.10" r="1.4" fill="none" stroke="#d6d6d6" stroke-width="1.3"/><rect x="768" y="405.50" width="13.2" height="13.2" fill="#f4f4f4" stroke="#1c1c1c" stroke-width="1"/><rect x="769.9" y="407.40" width="9.4" height="9.4" fill="#8c8c8c" transform="rotate(25 774.6 412.10)"/><circle cx="1007.4" cy="412.50" r="3.3" fill="#8e8e8e" stroke="#b0b0b0" stroke-width="0.8"/><rect x="673" y="436.66" width="354.5" height="1" fill="#3d3d3d"/><rect x="708" y="420.98" width="2.5" height="15.68" fill="#4a6df0"/><path d="M677.2 428.78 q4.2 -5.6 8.4 0 q-4.2 5.6 -8.4 0z" fill="none" stroke="#d6d6d6" stroke-width="1.4"/><circle cx="681.4" cy="428.78" r="1.4" fill="none" stroke="#d6d6d6" stroke-width="1.3"/><rect x="768" y="422.18" width="13.2" height="13.2" fill="#f4f4f4" stroke="#1c1c1c" stroke-width="1"/><rect x="769.9" y="424.08" width="9.4" height="9.4" fill="#8c8c8c" transform="rotate(25 774.6 428.78)"/><circle cx="1007.4" cy="429.18" r="3.3" fill="#8e8e8e" stroke="#b0b0b0" stroke-width="0.8"/><rect x="673" y="453.34" width="354.5" height="1" fill="#3d3d3d"/><rect x="708" y="437.66" width="2.5" height="15.68" fill="#4a6df0"/><path d="M677.2 445.46 q4.2 -5.6 8.4 0 q-4.2 5.6 -8.4 0z" fill="none" stroke="#d6d6d6" stroke-width="1.4"/><circle cx="681.4" cy="445.46" r="1.4" fill="none" stroke="#d6d6d6" stroke-width="1.3"/><rect x="768" y="438.86" width="13.2" height="13.2" fill="#f4f4f4" stroke="#1c1c1c" stroke-width="1"/><rect x="769.9" y="440.76" width="9.4" height="9.4" fill="#8c8c8c" transform="rotate(25 774.6 445.46)"/><circle cx="1007.4" cy="445.86" r="3.3" fill="#8e8e8e" stroke="#b0b0b0" stroke-width="0.8"/><rect x="673" y="470.02" width="354.5" height="1" fill="#3d3d3d"/><rect x="708" y="454.34" width="2.5" height="15.68" fill="#4a6df0"/><path d="M677.2 462.14 q4.2 -5.6 8.4 0 q-4.2 5.6 -8.4 0z" fill="none" stroke="#d6d6d6" stroke-width="1.4"/><circle cx="681.4" cy="462.14" r="1.4" fill="none" stroke="#d6d6d6" stroke-width="1.3"/><rect x="768" y="455.54" width="13.2" height="13.2" fill="#f4f4f4" stroke="#1c1c1c" stroke-width="1"/><rect x="769.9" y="457.44" width="9.4" height="9.4" fill="#8c8c8c" transform="rotate(25 774.6 462.14)"/><circle cx="1007.4" cy="462.54" r="3.3" fill="#8e8e8e" stroke="#b0b0b0" stroke-width="0.8"/><rect x="673" y="486.70" width="354.5" height="1" fill="#3d3d3d"/><rect x="708" y="471.02" width="2.5" height="15.68" fill="#4a6df0"/><path d="M677.2 478.82 q4.2 -5.6 8.4 0 q-4.2 5.6 -8.4 0z" fill="none" stroke="#d6d6d6" stroke-width="1.4"/><circle cx="681.4" cy="478.82" r="1.4" fill="none" stroke="#d6d6d6" stroke-width="1.3"/><rect x="768" y="472.22" width="13.2" height="13.2" fill="#f4f4f4" stroke="#1c1c1c" stroke-width="1"/><rect x="769.9" y="474.12" width="9.4" height="9.4" fill="#8c8c8c" transform="rotate(25 774.6 478.82)"/><circle cx="1007.4" cy="479.22" r="3.3" fill="#8e8e8e" stroke="#b0b0b0" stroke-width="0.8"/><rect x="673" y="503.38" width="354.5" height="1" fill="#3d3d3d"/><rect x="708" y="487.70" width="2.5" height="15.68" fill="#4a6df0"/><path d="M677.2 495.50 q4.2 -5.6 8.4 0 q-4.2 5.6 -8.4 0z" fill="none" stroke="#d6d6d6" stroke-width="1.4"/><circle cx="681.4" cy="495.50" r="1.4" fill="none" stroke="#d6d6d6" stroke-width="1.3"/><rect x="768" y="488.90" width="13.2" height="13.2" fill="#f4f4f4" stroke="#1c1c1c" stroke-width="1"/><rect x="769.9" y="490.80" width="9.4" height="9.4" fill="#8c8c8c" transform="rotate(25 774.6 495.50)"/><circle cx="1007.4" cy="495.90" r="3.3" fill="#8e8e8e" stroke="#b0b0b0" stroke-width="0.8"/><rect x="673" y="520.06" width="354.5" height="1" fill="#3d3d3d"/><rect x="708" y="504.38" width="2.5" height="15.68" fill="#4a6df0"/><path d="M677.2 512.18 q4.2 -5.6 8.4 0 q-4.2 5.6 -8.4 0z" fill="none" stroke="#d6d6d6" stroke-width="1.4"/><circle cx="681.4" cy="512.18" r="1.4" fill="none" stroke="#d6d6d6" stroke-width="1.3"/><rect x="768" y="505.58" width="13.2" height="13.2" fill="#f4f4f4" stroke="#1c1c1c" stroke-width="1"/><rect x="769.9" y="507.48" width="9.4" height="9.4" fill="#8c8c8c" transform="rotate(25 774.6 512.18)"/><circle cx="1007.4" cy="512.58" r="3.3" fill="#8e8e8e" stroke="#b0b0b0" stroke-width="0.8"/><rect x="673" y="536.74" width="354.5" height="1" fill="#3d3d3d"/><rect x="708" y="521.06" width="2.5" height="15.68" fill="#4a6df0"/><path d="M677.2 528.86 q4.2 -5.6 8.4 0 q-4.2 5.6 -8.4 0z" fill="none" stroke="#d6d6d6" stroke-width="1.4"/><circle cx="681.4" cy="528.86" r="1.4" fill="none" stroke="#d6d6d6" stroke-width="1.3"/><rect x="768" y="522.26" width="13.2" height="13.2" fill="#f4f4f4" stroke="#1c1c1c" stroke-width="1"/><rect x="769.9" y="524.16" width="9.4" height="9.4" fill="#8c8c8c" transform="rotate(25 774.6 528.86)"/><circle cx="1007.4" cy="529.26" r="3.3" fill="#8e8e8e" stroke="#b0b0b0" stroke-width="0.8"/><rect x="673" y="553.42" width="354.5" height="1" fill="#3d3d3d"/><rect x="708" y="537.74" width="2.5" height="15.68" fill="#4a6df0"/><path d="M677.2 545.54 q4.2 -5.6 8.4 0 q-4.2 5.6 -8.4 0z" fill="none" stroke="#d6d6d6" stroke-width="1.4"/><circle cx="681.4" cy="545.54" r="1.4" fill="none" stroke="#d6d6d6" stroke-width="1.3"/><rect x="768" y="538.94" width="13.2" height="13.2" fill="#f4f4f4" stroke="#1c1c1c" stroke-width="1"/><rect x="768.5" y="541.34" width="12.2" height="8.4" fill="#8a8a8a"/><circle cx="1007.4" cy="545.94" r="3.3" fill="#8e8e8e" stroke="#b0b0b0" stroke-width="0.8"/><rect x="673" y="570.10" width="354.5" height="1" fill="#3d3d3d"/><rect x="708" y="554.42" width="2.5" height="15.68" fill="#4a6df0"/><path d="M677.2 562.22 q4.2 -5.6 8.4 0 q-4.2 5.6 -8.4 0z" fill="none" stroke="#d6d6d6" stroke-width="1.4"/><circle cx="681.4" cy="562.22" r="1.4" fill="none" stroke="#d6d6d6" stroke-width="1.3"/><rect x="768" y="555.62" width="13.2" height="13.2" fill="#f4f4f4" stroke="#1c1c1c" stroke-width="1"/><rect x="768.5" y="558.02" width="12.2" height="8.4" fill="#8a8a8a"/><circle cx="1007.4" cy="562.62" r="3.3" fill="#8e8e8e" stroke="#b0b0b0" stroke-width="0.8"/><rect x="673" y="586.78" width="354.5" height="1" fill="#3d3d3d"/><rect x="708" y="571.10" width="2.5" height="15.68" fill="#4a6df0"/><path d="M735.2 575.70 l3.2 3.2 l-3.2 3.2" fill="none" stroke="#e0e0e0" stroke-width="1.2"/><rect x="749.6" y="572.30" width="13.2" height="13.2" fill="#ffffff" stroke="#1c1c1c" stroke-width="1"/><circle cx="1007.4" cy="579.30" r="3.1" fill="none" stroke="#d0d0d0" stroke-width="1.1"/><rect x="673" y="603.46" width="354.5" height="1" fill="#3d3d3d"/><rect x="708" y="587.78" width="2.5" height="15.68" fill="#4a6df0"/><path d="M735.2 592.38 l3.2 3.2 l-3.2 3.2" fill="none" stroke="#e0e0e0" stroke-width="1.2"/><rect x="749.6" y="588.98" width="13.2" height="13.2" fill="#ffffff" stroke="#1c1c1c" stroke-width="1"/><path d="M751.6 591.98h1M753.6 597.98h1M758.6 593.98h1M757.6 598.98h2" stroke="#888" stroke-width="1"/><circle cx="1007.4" cy="595.98" r="3.1" fill="none" stroke="#d0d0d0" stroke-width="1.1"/><rect x="673" y="620.14" width="354.5" height="1" fill="#3d3d3d"/><rect x="708" y="604.46" width="2.5" height="15.68" fill="#4a6df0"/><path d="M735.2 609.06 l3.2 3.2 l-3.2 3.2" fill="none" stroke="#e0e0e0" stroke-width="1.2"/><rect x="749.6" y="605.66" width="13.2" height="13.2" fill="#ffffff" stroke="#1c1c1c" stroke-width="1"/><circle cx="1007.4" cy="612.66" r="3.1" fill="none" stroke="#d0d0d0" stroke-width="1.1"/><rect x="673" y="636.82" width="354.5" height="1" fill="#3d3d3d"/><rect x="708" y="621.14" width="2.5" height="15.68" fill="#4a6df0"/><path d="M677.2 628.94 q4.2 -5.6 8.4 0 q-4.2 5.6 -8.4 0z" fill="none" stroke="#d6d6d6" stroke-width="1.4"/><circle cx="681.4" cy="628.94" r="1.4" fill="none" stroke="#d6d6d6" stroke-width="1.3"/><path d="M735.2 625.74 l3.2 3.2 l-3.2 3.2" fill="none" stroke="#e0e0e0" stroke-width="1.2"/><rect x="749.6" y="622.34" width="13.2" height="13.2" fill="#ffffff" stroke="#1c1c1c" stroke-width="1"/><path d="M751.6 632.34 l2 -6 l4 -1 l3 4 l-3 3z M753.6 627.34 l5 5" fill="none" stroke="#777" stroke-width="0.9"/><circle cx="1007.4" cy="629.34" r="3.1" fill="none" stroke="#d0d0d0" stroke-width="1.1"/><rect x="690" y="154" width="0.8" height="480.5" fill="#404040"/><rect x="1015.6" y="160" width="5" height="5" fill="#3b6cf5" stroke="#1a2a5a" stroke-width="0.8"/><path d="M1023 154.2 h4.6 v5z" fill="#e8e8e8"/><rect x="1028" y="154" width="9" height="480.5" fill="#434343"/><rect x="1028.2" y="164.5" width="8.6" height="389.5" rx="1" fill="#555555"/><path d="M1029.8 160 l2.7 -2.7 l2.7 2.7 M1029.8 627.6 l2.7 2.7 l2.7 -2.7" fill="none" stroke="#bdbdbd" stroke-width="1"/><path d="M1009.4 136 l2.7 2.7 l-2.7 2.7 M1013.4 136 l2.7 2.7 l-2.7 2.7" fill="none" stroke="#c4c4c4" stroke-width="1"/><rect x="1022.4" y="134.2" width="1.2" height="8.6" fill="#bdbdbd"/><path d="M1029 136 h8.4 M1029 138.7 h8.4 M1029 141.4 h8.4" stroke="#c4c4c4" stroke-width="1.2"/><path d="M912.6 637.6 h-4.8 v8.8 h8.8 v-4.8" fill="none" stroke="#d0d0d0" stroke-width="1.2"/><path d="M911.4 643 l5.6 -5.6 M913.4 637 h4 v4" fill="none" stroke="#d0d0d0" stroke-width="1.2"/><circle cx="934.6" cy="640.4" r="3.4" fill="none" stroke="#d0d0d0" stroke-width="1.3"/><path d="M932.2 643 l-3.6 3.6" stroke="#d0d0d0" stroke-width="1.6"/><rect x="949.4" y="637.4" width="6.4" height="8" fill="#5c5c5c"/><rect x="951" y="639" width="3" height="3" fill="#6a6a6a"/><path d="M968.6 640.4 h3 M972.4 638 h7 v8 h-3 v-4 h-4z" fill="#626262" stroke="#626262" stroke-width="0.8"/><path d="M991 637.6 h8 v8 h-4 v-4 h-4z" fill="#e8e8e8"/><path d="M995 645.6 v-4 h-4" fill="none" stroke="#999" stroke-width="0.8"/><path d="M1011.6 639.4 h7.6 M1013.8 639 v-1.4 h3.2 v1.4" fill="none" stroke="#d0d0d0" stroke-width="1.1"/><path d="M1012.4 640.6 h6 l-0.5 6 h-5z" fill="#d0d0d0"/><path d="M1014.2 641.8 v3.6 M1016.6 641.8 v3.6" stroke="#484848" stroke-width="0.8"/></svg><div class="t" style="left:749.20px;top:156.87px;font-size:9.6px;color:#dcdcdc;transform:scaleX(0.8400);transform-origin:0 0;">Level 2</div><div class="t" style="left:767.50px;top:173.55px;font-size:9.6px;color:#dcdcdc;transform:scaleX(0.8560);transform-origin:0 0;">Side lables</div><div class="t" style="left:767.50px;top:190.23px;font-size:9.6px;color:#dcdcdc;transform:scaleX(0.9041);transform-origin:0 0;">Outline</div><div class="t" style="left:767.50px;top:206.91px;font-size:9.6px;color:#dcdcdc;transform:scaleX(0.8359);transform-origin:0 0;">Zones</div><div class="t" style="left:767.50px;top:223.59px;font-size:9.6px;color:#dcdcdc;transform:scaleX(0.8566);transform-origin:0 0;">Skeleton</div><div class="t" style="left:767.50px;top:240.27px;font-size:9.6px;color:#dcdcdc;transform:scaleX(0.9109);transform-origin:0 0;">bookings</div><div class="t" style="left:785.60px;top:256.95px;font-size:9.6px;color:#dcdcdc;transform:scaleX(0.8573);transform-origin:0 0;">names</div><div class="t" style="left:785.60px;top:273.63px;font-size:9.6px;color:#e4e8ee;transform:scaleX(0.9514);transform-origin:0 0;">area-2.01-status</div><div class="t" style="left:785.60px;top:290.31px;font-size:9.6px;color:#e4e8ee;transform:scaleX(0.9514);transform-origin:0 0;">area-2.02-status</div><div class="t" style="left:785.60px;top:306.99px;font-size:9.6px;color:#e4e8ee;transform:scaleX(0.9514);transform-origin:0 0;">area-2.03-status</div><div class="t" style="left:785.60px;top:323.67px;font-size:9.6px;color:#e4e8ee;transform:scaleX(0.9514);transform-origin:0 0;">area-2.04-status</div><div class="t" style="left:785.60px;top:340.35px;font-size:9.6px;color:#e4e8ee;transform:scaleX(0.9514);transform-origin:0 0;">area-2.05-status</div><div class="t" style="left:785.60px;top:357.03px;font-size:9.6px;color:#e4e8ee;transform:scaleX(0.9514);transform-origin:0 0;">area-2.06-status</div><div class="t" style="left:785.60px;top:373.71px;font-size:9.6px;color:#e4e8ee;transform:scaleX(0.9514);transform-origin:0 0;">area-2.07-status</div><div class="t" style="left:785.60px;top:390.39px;font-size:9.6px;color:#e4e8ee;transform:scaleX(0.9514);transform-origin:0 0;">area-2.08-status</div><div class="t" style="left:785.60px;top:407.07px;font-size:9.6px;color:#dcdcdc;transform:scaleX(0.9140);transform-origin:0 0;">&lt;Path&gt;</div><div class="t" style="left:785.60px;top:423.75px;font-size:9.6px;color:#dcdcdc;transform:scaleX(0.9140);transform-origin:0 0;">&lt;Path&gt;</div><div class="t" style="left:785.60px;top:440.43px;font-size:9.6px;color:#dcdcdc;transform:scaleX(0.9140);transform-origin:0 0;">&lt;Path&gt;</div><div class="t" style="left:785.60px;top:457.11px;font-size:9.6px;color:#dcdcdc;transform:scaleX(0.9140);transform-origin:0 0;">&lt;Path&gt;</div><div class="t" style="left:785.60px;top:473.79px;font-size:9.6px;color:#dcdcdc;transform:scaleX(0.9140);transform-origin:0 0;">&lt;Path&gt;</div><div class="t" style="left:785.60px;top:490.47px;font-size:9.6px;color:#dcdcdc;transform:scaleX(0.9140);transform-origin:0 0;">&lt;Path&gt;</div><div class="t" style="left:785.60px;top:507.15px;font-size:9.6px;color:#dcdcdc;transform:scaleX(0.9140);transform-origin:0 0;">&lt;Path&gt;</div><div class="t" style="left:785.60px;top:523.83px;font-size:9.6px;color:#dcdcdc;transform:scaleX(0.9140);transform-origin:0 0;">&lt;Path&gt;</div><div class="t" style="left:785.60px;top:540.51px;font-size:9.6px;color:#dcdcdc;transform:scaleX(0.9140);transform-origin:0 0;">&lt;Path&gt;</div><div class="t" style="left:785.60px;top:557.19px;font-size:9.6px;color:#dcdcdc;transform:scaleX(0.9140);transform-origin:0 0;">&lt;Path&gt;</div><div class="t" style="left:767.50px;top:573.87px;font-size:9.6px;color:#dcdcdc;transform:scaleX(0.8543);transform-origin:0 0;">tags</div><div class="t" style="left:767.50px;top:590.55px;font-size:9.6px;color:#dcdcdc;transform:scaleX(0.8516);transform-origin:0 0;">Signage</div><div class="t" style="left:767.50px;top:607.23px;font-size:9.6px;color:#dcdcdc;transform:scaleX(0.9449);transform-origin:0 0;">area-02-closed</div><div class="t" style="left:767.50px;top:623.91px;font-size:9.6px;color:#dcdcdc;transform:scaleX(0.9255);transform-origin:0 0;">plants and furniature</div><div class="t" style="left:673.00px;top:637.27px;font-size:9.6px;color:#d6d6d6;transform:scaleX(0.9058);transform-origin:0 0;">1 Layer</div><div class="abs" style="left:34px;top:650px;width:975px;height:8.4px;background:#3b3b3b;overflow:hidden"><div class="abs" style="left:2.5px;top:1px;width:41px;height:12px;background:#333;border:0.8px solid #4a4a4a"></div><div class="abs" style="left:87px;top:1px;width:36px;height:12px;background:#333;border:0.8px solid #4a4a4a"></div><div class="t" style="left:6.00px;top:3.87px;font-size:9.6px;color:#d8d8d8;transform:scaleX(0.7942);transform-origin:0 0;">100%</div><div class="t" style="left:94.50px;top:3.87px;font-size:9.6px;color:#d8d8d8;">1</div><div class="t" style="left:205.00px;top:3.67px;font-size:9.6px;color:#bdbdbd;transform:scaleX(0.9065);transform-origin:0 0;">Toggle Direct Selection</div><svg style="left:0;top:0" width="400" height="12"><path d="M46.6 5.4 l2.6 2.6 l2.6 -2.6 M126.6 5.4 l2.6 2.6 l2.6 -2.6" fill="none" stroke="#d8d8d8" stroke-width="1.1"/><path d="M64 5v5l-4 -2.5z M73 5v5l-4 -2.5z M144 5v5l4 -2.5z M157 5v5l4 -2.5z" fill="#5a5a5a"/><path d="M333.6 4.6 v6 l4.6 -3z" fill="#d0d0d0"/><path d="M351 5 l-2.6 2.6 l2.6 2.6" fill="none" stroke="#999" stroke-width="1"/></svg></div><div class="abs" style="left:0;top:658.4px;width:1148px;height:2px;background:#0a0a0a"></div><div class="abs" style="left:0;top:0;width:2px;height:660px;background:#0a0a0a"></div><div class="abs" style="left:1146px;top:0;width:2px;height:660px;background:#0a0a0a"></div>
</div></body></html>
